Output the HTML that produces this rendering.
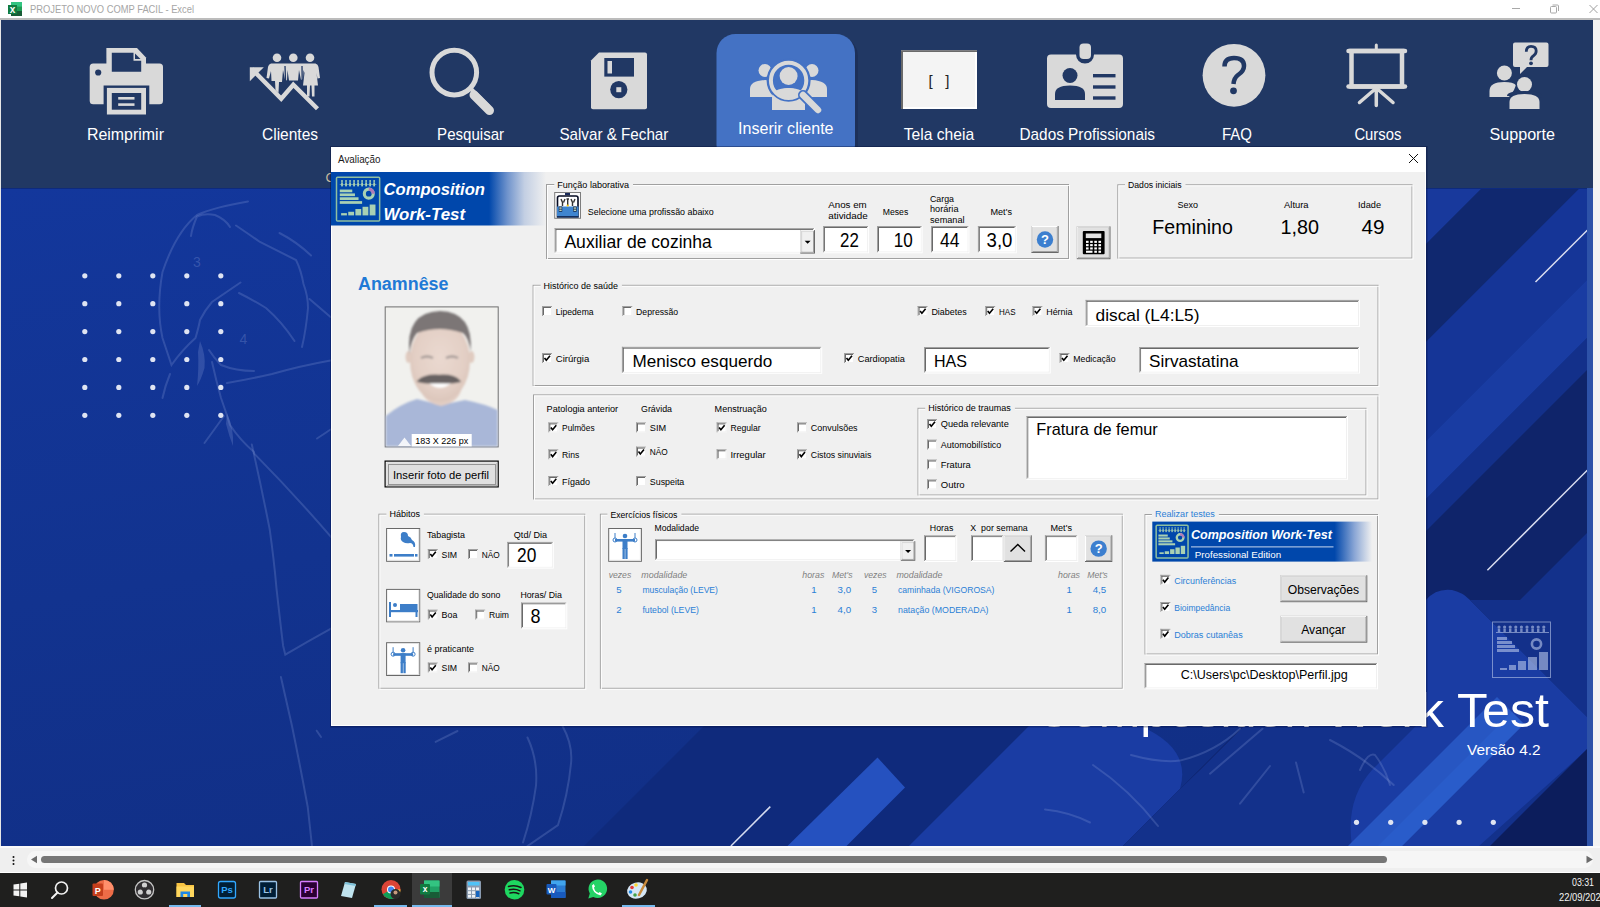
<!DOCTYPE html>
<html><head><meta charset="utf-8">
<style>
*{margin:0;padding:0}
html,body{width:1600px;height:907px;overflow:hidden;background:#fff}
svg{position:absolute;left:0;top:0;font-family:"Liberation Sans",sans-serif}
</style></head><body>
<svg width="1600" height="907" viewBox="0 0 1600 907">
<rect x="0" y="0" width="1600" height="907" fill="#ffffff"/>
<rect x="0" y="18" width="1600" height="2" fill="#bcbcbc"/>
<rect x="0" y="20" width="1" height="826" fill="#e6e6e6"/>
<rect x="1" y="20" width="1592" height="168" fill="#213864"/>
<defs>
<linearGradient id="bgg" x1="0" y1="0" x2="0.4" y2="1">
<stop offset="0" stop-color="#13379c"/><stop offset="0.55" stop-color="#12338f"/><stop offset="1" stop-color="#112f86"/>
</linearGradient>
<clipPath id="bgclip"><rect x="1" y="188" width="1586" height="658"/></clipPath>
</defs>
<g clip-path="url(#bgclip)">
<rect x="1" y="188" width="1586" height="658" fill="url(#bgg)"/>
<path d="M1280 150L1605 150L855 900L530 900Z" fill="#0f2a7c" opacity="1"/>
<path d="M877.5 757.5L905 787.5L846 846.5L787 846.5Z" fill="#2551bf"/>
<path d="M770.3 806.6L730.9 846" stroke="#d5dcf0" stroke-width="1.5"/>
<path d="M909 846L1029 726L1140 726Q1192 748 1180 789L1123 846Z" fill="#1a3ca3"/>
<path d="M1819 150L1860 150L1110 900L1069 900Z" fill="#0f2368" opacity="1"/>
<path d="M1123 846L1180 789L1200 770L1245 725L1600 725V846Z" fill="#13318b"/>
<rect x="1425" y="188" width="162" height="540" fill="#13318b"/>
<clipPath id="rs"><rect x="1425" y="188" width="162" height="540"/></clipPath>
<g clip-path="url(#rs)">
<path d="M-150 150L1520 150L770 900L-900 900Z" fill="#18399c" opacity="1"/>
<path d="M1520 150L1618 150L868 900L770 900Z" fill="#10286f" opacity="1"/>
<path d="M1618 150L1717 150L967 900L868 900Z" fill="#153597" opacity="1"/>
<path d="M1717 150L1775 150L1025 900L967 900Z" fill="#193ca2" opacity="1"/>
<path d="M1775 150L1807 150L1057 900L1025 900Z" fill="#13308a" opacity="1"/>
<path d="M1807 150L1970 150L1220 900L1057 900Z" fill="#0f246a" opacity="1"/>
</g>
<path d="M1426 600Q1436 588 1452 590Q1462 592 1470 600L1600 730V738L1479 846H1352Q1345 800 1372 770L1426 716Z" fill="#1a3ca3"/>
<path d="M1600 730L1470 600L1426 600V716L1372 770Q1345 800 1352 846H1600Z" fill="none"/>
<path d="M1490 846L1600 736V846Z" fill="#0c1d5c"/>
<path d="M1470 600L1600 730V600Z" fill="#13308a"/>
<path d="M1348 846L1497 697L1524 724L1402 846Z" fill="#2756c2"/>
<path d="M1378 846L1512 712L1524 724L1402 846Z" fill="#2c60cf" opacity="0.6"/>
<path d="M1535.5 282L1590 227.5M1487.4 570.3L1590 467.5" stroke="#d8dcef" stroke-width="1.5"/>
<path d="M248 201.5Q215 207 197 215Q176 232 162.5 272Q156 308 162.5 338L171.5 365Q182 350 195.5 338Q199 326 200 320Q205 310 212 302L240.5 282.5" fill="none" stroke="#8aa0dd" stroke-opacity="0.25" stroke-width="2" stroke-linecap="round"/>
<path d="M197 216.5Q205 213 215 215Q225 219 230 227M197 216.5Q192 228 191 236" fill="none" stroke="#8aa0dd" stroke-opacity="0.25" stroke-width="2" stroke-linecap="round"/>
<path d="M236 225.5Q250 235 260 242Q280 252 296 260Q301 270 303.5 284Q308 296 308 308Q306 330 302 347" fill="none" stroke="#8aa0dd" stroke-opacity="0.25" stroke-width="2" stroke-linecap="round"/>
<path d="M279.5 233Q297 242 311 255.5" fill="none" stroke="#8aa0dd" stroke-opacity="0.25" stroke-width="2" stroke-linecap="round"/>
<path d="M309.5 299Q320 308 330.5 317" fill="none" stroke="#8aa0dd" stroke-opacity="0.25" stroke-width="2" stroke-linecap="round"/>
<path d="M239 293Q253 300 266 308Q282 322 294.5 341" fill="none" stroke="#8aa0dd" stroke-opacity="0.25" stroke-width="2" stroke-linecap="round"/>
<path d="M209 350Q214 358 221 365Q236 371 254 371" fill="none" stroke="#8aa0dd" stroke-opacity="0.25" stroke-width="2" stroke-linecap="round"/>
<path d="M227 383Q250 379 272 374Q300 366 330.5 360.5" fill="none" stroke="#8aa0dd" stroke-opacity="0.25" stroke-width="2" stroke-linecap="round"/>
<path d="M170 374Q165 386 162.5 398" fill="none" stroke="#8aa0dd" stroke-opacity="0.25" stroke-width="2" stroke-linecap="round"/>
<path d="M212 362Q216 380 221 398Q226 412 230 425Q240 440 254 452" fill="none" stroke="#8aa0dd" stroke-opacity="0.25" stroke-width="2" stroke-linecap="round"/>
<path d="M224 416Q214 430 204.5 443" fill="none" stroke="#8aa0dd" stroke-opacity="0.25" stroke-width="2" stroke-linecap="round"/>
<path d="M317 438.5Q324 434 330.5 429.5" fill="none" stroke="#8aa0dd" stroke-opacity="0.25" stroke-width="2" stroke-linecap="round"/>
<path d="M251.8 444.5Q262 490 269.7 529.4Q274 560 276.4 587.6Q280 620 283.1 645.7L285.3 654.7Q310 640 332.3 627.8" fill="none" stroke="#8aa0dd" stroke-opacity="0.25" stroke-width="2" stroke-linecap="round"/>
<path d="M254 453.4Q295 495 332.3 538.4" fill="none" stroke="#8aa0dd" stroke-opacity="0.25" stroke-width="2" stroke-linecap="round"/>
<path d="M280.9 677Q286 700 292 726Q300 765 307.7 806.7L312 846" fill="none" stroke="#8aa0dd" stroke-opacity="0.25" stroke-width="2" stroke-linecap="round"/>
<path d="M316.7 730.7L321 737" fill="none" stroke="#8aa0dd" stroke-opacity="0.25" stroke-width="2" stroke-linecap="round"/>
<path d="M527.5 737.5Q538 760 536 785.6Q532 815 523 842.5" fill="none" stroke="#8aa0dd" stroke-opacity="0.25" stroke-width="2" stroke-linecap="round"/>
<path d="M562.5 726Q573 745 571 763.7Q568 795 558 825L527.5 846" fill="none" stroke="#8aa0dd" stroke-opacity="0.25" stroke-width="2" stroke-linecap="round"/>
<path d="M435.6 741.9L457.5 731" fill="none" stroke="#8aa0dd" stroke-opacity="0.25" stroke-width="2" stroke-linecap="round"/>
<path d="M1093 765Q1130 790 1158 826" fill="none" stroke="#8aa0dd" stroke-opacity="0.25" stroke-width="2" stroke-linecap="round"/>
<path d="M1045 809.4Q1070 812 1090 822.5" fill="none" stroke="#8aa0dd" stroke-opacity="0.25" stroke-width="2" stroke-linecap="round"/>
<path d="M1131 755Q1160 763 1180 760.6Q1215 752 1240 728.7" fill="none" stroke="#8aa0dd" stroke-opacity="0.25" stroke-width="2" stroke-linecap="round"/>
<path d="M1210 773.7L1262.5 728.7" fill="none" stroke="#8aa0dd" stroke-opacity="0.25" stroke-width="2" stroke-linecap="round"/>
<path d="M1240 803.7L1270 766" fill="none" stroke="#8aa0dd" stroke-opacity="0.25" stroke-width="2" stroke-linecap="round"/>
<path d="M1296 762.5L1303.7 792.5" fill="none" stroke="#8aa0dd" stroke-opacity="0.25" stroke-width="2" stroke-linecap="round"/>
<path d="M1330 740Q1365 758 1393.7 785" fill="none" stroke="#8aa0dd" stroke-opacity="0.25" stroke-width="2" stroke-linecap="round"/>
<path d="M1360 770Q1368 752 1375 755Q1385 768 1390 785" fill="none" stroke="#8aa0dd" stroke-opacity="0.25" stroke-width="2" stroke-linecap="round"/>
<path d="M200 341Q206 355 204.5 368Q201 380 197 386Q199 368 198 352Z" fill="#8aa0dd" fill-opacity="0.25"/>
<path d="M227 413Q234 428 233 446Q229 436 226 424Z" fill="#8aa0dd" fill-opacity="0.25"/>
<text x="197" y="267" font-size="14" fill="#8aa0dd" fill-opacity="0.3" text-anchor="middle">3</text>
<text x="243.5" y="344" font-size="14" fill="#8aa0dd" fill-opacity="0.3" text-anchor="middle">4</text>
<circle cx="84.8" cy="275.8" r="2.6" fill="#dfe4f2"/>
<circle cx="84.8" cy="303.7" r="2.6" fill="#dfe4f2"/>
<circle cx="84.8" cy="331.6" r="2.6" fill="#dfe4f2"/>
<circle cx="84.8" cy="359.5" r="2.6" fill="#dfe4f2"/>
<circle cx="84.8" cy="387.4" r="2.6" fill="#dfe4f2"/>
<circle cx="84.8" cy="415.3" r="2.6" fill="#dfe4f2"/>
<circle cx="118.8" cy="275.8" r="2.6" fill="#dfe4f2"/>
<circle cx="118.8" cy="303.7" r="2.6" fill="#dfe4f2"/>
<circle cx="118.8" cy="331.6" r="2.6" fill="#dfe4f2"/>
<circle cx="118.8" cy="359.5" r="2.6" fill="#dfe4f2"/>
<circle cx="118.8" cy="387.4" r="2.6" fill="#dfe4f2"/>
<circle cx="118.8" cy="415.3" r="2.6" fill="#dfe4f2"/>
<circle cx="152.8" cy="275.8" r="2.6" fill="#dfe4f2"/>
<circle cx="152.8" cy="303.7" r="2.6" fill="#dfe4f2"/>
<circle cx="152.8" cy="331.6" r="2.6" fill="#dfe4f2"/>
<circle cx="152.8" cy="359.5" r="2.6" fill="#dfe4f2"/>
<circle cx="152.8" cy="387.4" r="2.6" fill="#dfe4f2"/>
<circle cx="152.8" cy="415.3" r="2.6" fill="#dfe4f2"/>
<circle cx="186.8" cy="275.8" r="2.6" fill="#dfe4f2"/>
<circle cx="186.8" cy="303.7" r="2.6" fill="#dfe4f2"/>
<circle cx="186.8" cy="331.6" r="2.6" fill="#dfe4f2"/>
<circle cx="186.8" cy="359.5" r="2.6" fill="#dfe4f2"/>
<circle cx="186.8" cy="387.4" r="2.6" fill="#dfe4f2"/>
<circle cx="186.8" cy="415.3" r="2.6" fill="#dfe4f2"/>
<circle cx="220.8" cy="275.8" r="2.6" fill="#dfe4f2"/>
<circle cx="220.8" cy="303.7" r="2.6" fill="#dfe4f2"/>
<circle cx="220.8" cy="331.6" r="2.6" fill="#dfe4f2"/>
<circle cx="220.8" cy="359.5" r="2.6" fill="#dfe4f2"/>
<circle cx="220.8" cy="387.4" r="2.6" fill="#dfe4f2"/>
<circle cx="220.8" cy="415.3" r="2.6" fill="#dfe4f2"/>
<circle cx="1356.5" cy="822.3" r="2.6" fill="#dfe4f2"/>
<circle cx="1390.7" cy="822.3" r="2.6" fill="#dfe4f2"/>
<circle cx="1424.9" cy="822.3" r="2.6" fill="#dfe4f2"/>
<circle cx="1459.1" cy="822.3" r="2.6" fill="#dfe4f2"/>
<circle cx="1493.3" cy="822.3" r="2.6" fill="#dfe4f2"/>
<g font-size="49" fill="#ffffff"><text x="1035" y="727" textLength="277" lengthAdjust="spacingAndGlyphs">Composition</text><text x="1325" y="727" textLength="119" lengthAdjust="spacingAndGlyphs">Work</text><text x="1457" y="727" textLength="92" lengthAdjust="spacingAndGlyphs">Test</text></g>
<text x="1467" y="755" font-size="15.3" fill="#ffffff" textLength="73.5" lengthAdjust="spacingAndGlyphs">Versão 4.2</text>
<g opacity="0.6">
<rect x="1492.5" y="622" width="58" height="55.5" fill="none" stroke="#b8c6ea" stroke-width="1"/>
<g fill="#b8c6ea">
<circle cx="1499.0" cy="627" r="1.6"/><rect x="1497.8" y="628.5" width="2.4" height="4"/>
<circle cx="1504.6" cy="627" r="1.6"/><rect x="1503.4" y="628.5" width="2.4" height="4"/>
<circle cx="1510.2" cy="627" r="1.6"/><rect x="1509.0" y="628.5" width="2.4" height="4"/>
<circle cx="1515.8" cy="627" r="1.6"/><rect x="1514.6" y="628.5" width="2.4" height="4"/>
<circle cx="1521.4" cy="627" r="1.6"/><rect x="1520.2" y="628.5" width="2.4" height="4"/>
<circle cx="1527.0" cy="627" r="1.6"/><rect x="1525.8" y="628.5" width="2.4" height="4"/>
<circle cx="1532.6" cy="627" r="1.6"/><rect x="1531.4" y="628.5" width="2.4" height="4"/>
<circle cx="1538.2" cy="627" r="1.6"/><rect x="1537.0" y="628.5" width="2.4" height="4"/>
<circle cx="1543.8" cy="627" r="1.6"/><rect x="1542.6" y="628.5" width="2.4" height="4"/>
<rect x="1496" y="632" width="53" height="1" fill="#b8c6ea"/>
<rect x="1497" y="637" width="10" height="3" fill="#b8c6ea"/>
<rect x="1497" y="641" width="15" height="3" fill="#b8c6ea"/>
<rect x="1497" y="645" width="18" height="3" fill="#b8c6ea"/>
<rect x="1497" y="649" width="22" height="3" fill="#b8c6ea"/>
<circle cx="1536.5" cy="644" r="4.6" fill="none" stroke="#b8c6ea" stroke-width="2.6"/>
<rect x="1500" y="668" width="7" height="2" fill="#b8c6ea"/>
<rect x="1509" y="665" width="7" height="5" fill="#b8c6ea"/>
<rect x="1518" y="661" width="8" height="9" fill="#b8c6ea"/>
<rect x="1528" y="657" width="9" height="13" fill="#b8c6ea"/>
<rect x="1539" y="652" width="9" height="18" fill="#b8c6ea"/>
</g></g>
</g>
<rect x="1" y="188" width="1586" height="1" fill="#0d2a7e"/>
<rect x="1587" y="188" width="6" height="658" fill="#2d52a8"/>
<rect x="1593" y="20" width="7" height="826" fill="#f3f3f3"/>
<g fill="#d9d9d9">
 <!-- printer -->
 <rect x="89.7" y="63.6" width="73.3" height="40.6" rx="3.5"/>
 <path d="M106.4 47.9H137L146 57.5V66H106.4Z"/>
 <path d="M111.8 52.7H133.5V60.8H141.2V71.8H111.8Z" fill="#213864"/>
 <path d="M135 53.5L140.5 59H135Z" fill="#213864"/>
 <circle cx="98.2" cy="72.5" r="3.1" fill="#213864"/>
 <rect x="103.6" y="85.5" width="45.7" height="20" fill="#213864"/>
 <rect x="106.9" y="87.9" width="39.1" height="26.6"/>
 <rect x="111.8" y="93" width="29.4" height="16.7" fill="#213864"/>
 <rect x="118.2" y="97" width="16.3" height="2.6"/>
 <rect x="118.2" y="103.3" width="16.3" height="2.6"/>
 <!-- clientes -->
 <path d="M252 69L281.2 98.8L293.3 84.8L317.5 108.8" fill="none" stroke="#d9d9d9" stroke-width="4.4" stroke-linejoin="miter"/>
 <path d="M249.8 67.3L263.8 67.3L249.8 81.3Z"/>
 <circle cx="277" cy="57.8" r="4.3"/><circle cx="293.3" cy="57.8" r="4.3"/><circle cx="310" cy="57.8" r="4.3"/>
 <path d="M271 63.5Q268.5 64 268 67L266.5 78L269 78.5L271 71L271.5 81L275 81L275.5 90L278.5 93L279 82L282 82L283 70L285 79.5L287 80.5L287.5 70L289 80.5L298 80.5L299 70L301 80L303 79L303.5 70L304.5 73L303 85.5L307 85.5L307 96.5L309.5 96.5L310 85.5L311.5 85.5L312 96.5L314.5 96.5L314.5 85.5L318 85.5L316.5 73L317.5 78.5L320 78L318.5 67Q318 64 315.5 63.5Z"/>
 <path d="M285 66L285.5 80M302 66L302.2 80" stroke="#213864" stroke-width="1.3"/>
 <!-- pesquisar -->
 <circle cx="454.3" cy="72.6" r="22.3" fill="none" stroke="#d9d9d9" stroke-width="5"/>
 <path d="M471 89L489 107" stroke="#d9d9d9" stroke-width="4" fill="none"/>
 <path d="M474 95L489.5 110.5" stroke="#d9d9d9" stroke-width="9" stroke-linecap="round" fill="none"/>
 <!-- salvar -->
 <path d="M599 52.5H645A2 2 0 0 1 647 54.5V107.3A2 2 0 0 1 645 109.3H593A2 2 0 0 1 591 107.3V60.5Z"/>
 <rect x="604.3" y="58" width="29.7" height="18.6" fill="#213864"/>
 <rect x="607.5" y="61" width="4.5" height="12.5"/>
 <circle cx="618.8" cy="89.6" r="8.6" fill="#213864"/>
 <rect x="616.3" y="87.2" width="5" height="5"/>

 <!-- inserir cliente button -->
</g>
<rect x="716.5" y="34" width="138.5" height="130" rx="19" fill="#1a2c52" opacity="0.6" transform="translate(3,3)"/>
<rect x="716.5" y="34" width="138.5" height="130" rx="19" fill="#4472c4"/>
<g fill="#d9d9d9">
 <circle cx="765" cy="70.5" r="6.5"/><circle cx="812" cy="70.5" r="6.5"/>
 <path d="M750 97V89Q750 81 765 80Q772 80 776 82V97Z"/>
 <path d="M827 97V89Q827 81 812 80Q805 80 801 82V97Z"/>
 <circle cx="788.6" cy="80.4" r="22" fill="#4472c4"/>
 <circle cx="788.6" cy="76" r="9"/>
 <path d="M772 110V98Q772 88 788.6 88Q805 88 805 98V110Z"/>
 <path d="M773 99Q778 88 788.6 88Q800 88 805 99V110H772Z" />
 <circle cx="788.6" cy="80.4" r="19.5" fill="none" stroke="#4472c4" stroke-width="3.5"/>
 <circle cx="788.6" cy="80.4" r="17.7" fill="none" stroke="#d9d9d9" stroke-width="4"/>
 <path d="M803 95L818 110" stroke="#4472c4" stroke-width="10" stroke-linecap="round"/>
 <path d="M803 95L818 110" stroke="#d9d9d9" stroke-width="6.5" stroke-linecap="round"/>
 <path d="M772 98Q780 90 788.6 90.5Q797 90 805 98L801 103Q795 97 788.6 97Q782 97 776 103Z" fill="none"/>
</g>
<!-- tela cheia -->
<rect x="901" y="50.3" width="76" height="58.7" fill="#ffffff"/>
<path d="M901 50.3H977V52H903V109H901Z" fill="#6a6a6a"/>
<rect x="903" y="52" width="72" height="55" fill="#f4f4f4"/>
<text x="939" y="86" font-family="Liberation Sans" font-size="15" fill="#222" text-anchor="middle" style="white-space:pre">[   ]</text>
<g fill="#d9d9d9">
 <!-- dados profissionais -->
 <path d="M1051 54.6H1076A6 6 0 0 0 1094 54.6H1119A4 4 0 0 1 1123 58.6V103.9A4 4 0 0 1 1119 107.9H1051A4 4 0 0 1 1047 103.9V58.6A4 4 0 0 1 1051 54.6Z"/>
 <rect x="1079.5" y="43.5" width="11.5" height="15.5" rx="4"/>
 <circle cx="1070" cy="75.5" r="7.5" fill="#213864"/>
 <path d="M1055 100V94Q1055 85.5 1070 85.5Q1085 85.5 1085 94V100Z" fill="#213864"/>
 <rect x="1093" y="74" width="22.5" height="3.4" fill="#213864"/>
 <rect x="1093" y="85.3" width="22.5" height="3.4" fill="#213864"/>
 <rect x="1093" y="96.3" width="22.5" height="3.4" fill="#213864"/>
 <!-- faq -->
 <circle cx="1234" cy="75.3" r="31.4"/>
 <path d="M1224.5 66.5Q1224.5 58 1234 58Q1244 58 1244 66Q1244 71 1238 75Q1234 78 1233.5 84" fill="none" stroke="#213864" stroke-width="4.5"/>
 <circle cx="1233.5" cy="90.8" r="3.4" fill="#213864"/>
 <!-- cursos -->
 <path d="M1348.5 51H1405" stroke="#d9d9d9" stroke-width="4.5" stroke-linecap="round"/>
 <path d="M1348.5 86.5H1405" stroke="#d9d9d9" stroke-width="4.5" stroke-linecap="round"/>
 <rect x="1351.5" y="51" width="50.5" height="35.5" fill="none" stroke="#d9d9d9" stroke-width="4.5"/>
 <path d="M1376.3 45V51" stroke="#d9d9d9" stroke-width="3" stroke-linecap="round"/>
 <path d="M1376.3 88V105.5M1376.3 88L1359.5 102.5M1376.3 88L1393 102.5" stroke="#d9d9d9" stroke-width="3.5" stroke-linecap="round"/>
 <!-- supporte -->
 <path d="M1515 42.6H1546.5A2 2 0 0 1 1548.5 44.6V65A2 2 0 0 1 1546.5 67H1527L1520 74L1520 67H1515A2 2 0 0 1 1513 65V44.6A2 2 0 0 1 1515 42.6Z"/>
 <path d="M1526.3 51.8Q1526.3 46.3 1531 46.3Q1536.2 46.3 1536.2 51Q1536.2 54 1533.2 56Q1531 57.2 1531 60.2" fill="none" stroke="#213864" stroke-width="2.8"/>
 <circle cx="1531" cy="63.3" r="1.9" fill="#213864"/>
 <circle cx="1504.4" cy="73" r="7.5"/>
 <path d="M1489.5 97V91Q1489.5 82 1504.4 82Q1513 82 1516 85L1514 90L1509 97Z"/>
 <circle cx="1524.5" cy="84.5" r="9" fill="#213864"/>
 <circle cx="1524.5" cy="84.5" r="7.5"/>
 <path d="M1507 96Q1507 91 1524.5 91Q1542 91 1542 96V98Z" fill="#213864"/>
 <path d="M1509.5 109V102Q1509.5 94 1524.5 94Q1539.5 94 1539.5 102V109Z"/>
</g>
<g font-family="Liberation Sans" font-size="16.2" fill="#ffffff" text-anchor="middle">
 <text x="125.45" y="140" textLength="77" lengthAdjust="spacingAndGlyphs">Reimprimir</text>
 <text x="290" y="140" textLength="56" lengthAdjust="spacingAndGlyphs">Clientes</text>
 <text x="470.6" y="140" textLength="67" lengthAdjust="spacingAndGlyphs">Pesquisar</text>
 <text x="613.9" y="140" textLength="109" lengthAdjust="spacingAndGlyphs">Salvar &amp; Fechar</text>
 <text x="785.8" y="134.2" textLength="95.5" lengthAdjust="spacingAndGlyphs">Inserir cliente</text>
 <text x="938.9" y="140" textLength="70.5" lengthAdjust="spacingAndGlyphs">Tela cheia</text>
 <text x="1087.25" y="140" textLength="135.5" lengthAdjust="spacingAndGlyphs">Dados Profissionais</text>
 <text x="1237" y="140" textLength="30" lengthAdjust="spacingAndGlyphs">FAQ</text>
 <text x="1377.9" y="140" textLength="47" lengthAdjust="spacingAndGlyphs">Cursos</text>
 <text x="1522.2" y="140" textLength="65.5" lengthAdjust="spacingAndGlyphs">Supporte</text>
</g>
<!-- title bar -->
<g>
 <rect x="11" y="2" width="11" height="14" fill="#1f9d55"/>
 <rect x="11" y="2" width="11" height="4.6" fill="#33c481"/>
 <rect x="11" y="11" width="11" height="5" fill="#185c37"/>
 <rect x="8" y="5" width="9" height="9" fill="#107c41"/>
 <text x="12.6" y="13.2" font-family="Liberation Sans" font-size="10" font-weight="bold" fill="#fff" text-anchor="middle">x</text>
 <text x="30" y="12.8" font-family="Liberation Sans" font-size="10.5" fill="#a6a6a6" textLength="164" lengthAdjust="spacingAndGlyphs">PROJETO NOVO COMP FACIL - Excel</text>
 <path d="M1512 8.5H1520" stroke="#a8a8a8" stroke-width="1"/>
 <rect x="1550.5" y="6.5" width="6" height="6.5" rx="1" fill="none" stroke="#a8a8a8" stroke-width="1"/>
 <path d="M1552.5 5H1557.5A1 1 0 0 1 1558.5 6V11" fill="none" stroke="#a8a8a8" stroke-width="1"/>
 <path d="M1589.5 5L1597.5 13M1597.5 5L1589.5 13" stroke="#a0a0a0" stroke-width="1"/>
</g>

<text x="325.5" y="181.5" font-size="13" fill="#c9bb9f" textLength="9">C</text>
<rect x="330" y="146" width="1097.5" height="581.5" fill="#000a30" opacity="0.35"/>
<rect x="331" y="147" width="1095" height="579" fill="#ffffff"/>
<rect x="332" y="147" width="1093" height="578" fill="#f0f0f0"/>
<rect x="332" y="147" width="1093" height="25" fill="#ffffff"/>
<text x="338" y="162.6" font-size="10" fill="#1a1a1a" textLength="42.5" lengthAdjust="spacingAndGlyphs">Avaliação</text>
<path d="M1409 154L1418 163M1418 154L1409 163" stroke="#111" stroke-width="1"/>
<defs><linearGradient id="bang" x1="0" y1="0" x2="1" y2="0">
<stop offset="0" stop-color="#0047ab"/><stop offset="0.735" stop-color="#0047ab"/><stop offset="0.82" stop-color="#6f93cc"/><stop offset="0.9" stop-color="#c3cfe3"/><stop offset="1" stop-color="#f0f0f0"/></linearGradient>
<linearGradient id="bang2" x1="0" y1="0" x2="1" y2="0">
<stop offset="0" stop-color="#0047ab"/><stop offset="0.83" stop-color="#0047ab"/><stop offset="0.92" stop-color="#8aa6d5"/><stop offset="1" stop-color="#f0f0f0"/></linearGradient></defs>
<rect x="331" y="172" width="215" height="53.5" fill="url(#bang)"/>
<rect x="336.5" y="177.15" width="43.14999999999998" height="43.849999999999994" fill="none" stroke="#8fbfa0" stroke-width="1.5" rx="1"/>
<g fill="#a9d1b3">
<circle cx="342.00" cy="180.94" r="0.98"/>
<rect x="341.11" y="182.30" width="1.79" height="4.08"/>
<circle cx="346.02" cy="180.94" r="0.98"/>
<rect x="345.13" y="182.30" width="1.79" height="4.08"/>
<circle cx="350.04" cy="180.94" r="0.98"/>
<rect x="349.14" y="182.30" width="1.79" height="4.08"/>
<circle cx="354.06" cy="180.94" r="0.98"/>
<rect x="353.16" y="182.30" width="1.79" height="4.08"/>
<circle cx="358.07" cy="180.94" r="0.98"/>
<rect x="357.18" y="182.30" width="1.79" height="4.08"/>
<circle cx="362.09" cy="180.94" r="0.98"/>
<rect x="361.20" y="182.30" width="1.79" height="4.08"/>
<circle cx="366.11" cy="180.94" r="0.98"/>
<rect x="365.22" y="182.30" width="1.79" height="4.08"/>
<circle cx="370.13" cy="180.94" r="0.98"/>
<rect x="369.24" y="182.30" width="1.79" height="4.08"/>
<circle cx="374.15" cy="180.94" r="0.98"/>
<rect x="373.26" y="182.30" width="1.79" height="4.08"/>
<rect x="339.77" y="184.11" width="36.61" height="0.54"/>
<rect x="339.77" y="189.55" width="12.50" height="2.72"/>
<rect x="339.77" y="193.41" width="15.18" height="2.72"/>
<rect x="339.77" y="197.26" width="18.75" height="2.72"/>
<rect x="339.77" y="201.12" width="22.32" height="2.72"/>
<circle cx="368.79" cy="193.63" r="4.46" fill="none" stroke="#a9d1b3" stroke-width="3.13"/>
<path d="M368.79 189.17A4.46 4.46 0 0 1 373.26 193.63" fill="none" stroke="#b07ab8" stroke-width="3.13"/>
<rect x="341.11" y="213.13" width="5.80" height="2.27"/>
<rect x="348.25" y="211.77" width="5.80" height="3.63"/>
<rect x="355.40" y="209.05" width="5.80" height="6.35"/>
<rect x="362.54" y="206.78" width="5.80" height="8.62"/>
<rect x="369.68" y="204.52" width="5.80" height="10.88"/>
</g>
<text x="383.5" y="194.9" font-size="16.5" fill="#fff" font-weight="700" font-style="italic" textLength="101.5" lengthAdjust="spacingAndGlyphs">Composition</text>
<text x="383.5" y="219.5" font-size="16.5" fill="#fff" font-weight="700" font-style="italic" textLength="81.5" lengthAdjust="spacingAndGlyphs">Work-Test</text>
<rect x="546.5" y="184.5" width="522" height="74" fill="none" stroke="#a0a0a0" stroke-width="1"/>
<rect x="547.5" y="185.5" width="522" height="74" fill="none" stroke="#ffffff" stroke-width="1" opacity="0.9"/>
<rect x="554.3" y="182" width="78.7" height="5" fill="#f0f0f0"/>
<text x="557.3" y="188.2" font-size="9.6" fill="#000" textLength="71.7" lengthAdjust="spacingAndGlyphs">Função laborativa</text>
<rect x="554.2" y="192" width="26.8" height="26.8" fill="#7d7d7d"/>
<rect x="555.2" y="193" width="24.8" height="24.8" fill="#fbfbfb"/>
<rect x="565" y="193" width="5" height="2.2" fill="#1a2a5a"/>
<path d="M557.5 216.8V198Q557.5 196 559.5 196H576Q578 196 578 198V216.8Z" fill="#ffffff" stroke="#060b22" stroke-width="1.6"/>
<rect x="557" y="206.5" width="21.5" height="10.8" fill="#3f85cf"/>
<path d="M557 216.8H578.5" stroke="#0b1a40" stroke-width="1.2"/>
<path d="M561 199L562.5 202.5V206M565 199L563.5 202.5M566.5 199H569M567.7 199V205.5M571 199L572.5 202.5V206M575 199L573.5 202.5" fill="none" stroke="#333" stroke-width="1.4"/>
<circle cx="567.7" cy="205.5" r="1.1" fill="#f2c200"/>
<rect x="558.8" y="206.5" width="3.4" height="5.2" fill="#14213d"/><rect x="559.3" y="207.4" width="2.4" height="1.3" fill="#cfe6c8"/><rect x="559.3" y="209.6" width="2.4" height="1.3" fill="#cfe6c8"/>
<rect x="573.2" y="206.5" width="3.4" height="5.2" fill="#14213d"/><rect x="573.7" y="207.4" width="2.4" height="1.3" fill="#cfe6c8"/><rect x="573.7" y="209.6" width="2.4" height="1.3" fill="#cfe6c8"/>
<text x="587.8" y="214.7" font-size="9.6" fill="#000" textLength="125.9" lengthAdjust="spacingAndGlyphs">Selecione uma profissão abaixo</text>
<rect x="554.6" y="228.1" width="260.4" height="25.5" fill="#ffffff"/>
<rect x="554.6" y="228.1" width="259.4" height="1.0" fill="#a0a0a0"/>
<rect x="554.6" y="228.1" width="1.0" height="24.5" fill="#a0a0a0"/>
<rect x="555.6" y="229.1" width="257.4" height="1.0" fill="#696969"/>
<rect x="555.6" y="229.1" width="1.0" height="22.5" fill="#696969"/>
<rect x="555.6" y="251.6" width="258.4" height="1.0" fill="#f0f0f0"/>
<rect x="813" y="229.1" width="1" height="23.5" fill="#f0f0f0"/>
<rect x="556.6" y="230.1" width="256.4" height="21.5" fill="#fff"/>
<rect x="800.3" y="230.1" width="14.7" height="23.5" fill="#696969"/>
<rect x="800.3" y="230.1" width="13.7" height="22.5" fill="#ffffff"/>
<rect x="801.3" y="231.1" width="12.7" height="21.5" fill="#a0a0a0"/>
<rect x="801.3" y="231.1" width="11.7" height="20.5" fill="#e3e3e3"/>
<rect x="802.3" y="232.1" width="10.7" height="19.5" fill="#f0f0f0"/>
<path d="M804.65 240.85H810.65L807.65 243.85Z" fill="#000"/>
<text x="564.4" y="248.4" font-size="17.5" fill="#000" textLength="147.5" lengthAdjust="spacingAndGlyphs">Auxiliar de cozinha</text>
<text x="847.5" y="208" font-size="9.6" fill="#000" text-anchor="middle" textLength="38.5" lengthAdjust="spacingAndGlyphs">Anos em</text>
<text x="848" y="219" font-size="9.6" fill="#000" text-anchor="middle" textLength="39.5" lengthAdjust="spacingAndGlyphs">atividade</text>
<text x="895.5" y="215" font-size="9.6" fill="#000" text-anchor="middle" textLength="25.5" lengthAdjust="spacingAndGlyphs">Meses</text>
<text x="930" y="201.6" font-size="9.6" fill="#000" textLength="24" lengthAdjust="spacingAndGlyphs">Carga</text>
<text x="930" y="211.9" font-size="9.6" fill="#000" textLength="28.5" lengthAdjust="spacingAndGlyphs">horária</text>
<text x="930" y="223" font-size="9.6" fill="#000" textLength="34.5" lengthAdjust="spacingAndGlyphs">semanal</text>
<text x="1001.2" y="215" font-size="9.6" fill="#000" text-anchor="middle" textLength="21.5" lengthAdjust="spacingAndGlyphs">Met's</text>
<rect x="823.1" y="226" width="46.0" height="27.3" fill="#ffffff"/>
<rect x="823.1" y="226" width="45.0" height="1" fill="#a0a0a0"/>
<rect x="823.1" y="226" width="1.0" height="26.3" fill="#a0a0a0"/>
<rect x="824.1" y="227" width="43.0" height="1" fill="#696969"/>
<rect x="824.1" y="227" width="1.0" height="24.3" fill="#696969"/>
<rect x="824.1" y="251.3" width="44.0" height="1.0" fill="#f0f0f0"/>
<rect x="867.1" y="227" width="1.0" height="25.3" fill="#f0f0f0"/>
<rect x="825.1" y="228" width="42.0" height="23.3" fill="#fff"/>
<text x="849.4" y="246.9" font-size="20.5" fill="#000" text-anchor="middle" textLength="18.8" lengthAdjust="spacingAndGlyphs">22</text>
<rect x="877" y="226" width="45.6" height="27.3" fill="#ffffff"/>
<rect x="877" y="226" width="44.6" height="1" fill="#a0a0a0"/>
<rect x="877" y="226" width="1" height="26.3" fill="#a0a0a0"/>
<rect x="878" y="227" width="42.6" height="1" fill="#696969"/>
<rect x="878" y="227" width="1" height="24.3" fill="#696969"/>
<rect x="878" y="251.3" width="43.6" height="1.0" fill="#f0f0f0"/>
<rect x="920.6" y="227" width="1.0" height="25.3" fill="#f0f0f0"/>
<rect x="879" y="228" width="41.6" height="23.3" fill="#fff"/>
<text x="903.3" y="246.9" font-size="20.5" fill="#000" text-anchor="middle" textLength="19" lengthAdjust="spacingAndGlyphs">10</text>
<rect x="931" y="226" width="38.4" height="27.3" fill="#ffffff"/>
<rect x="931" y="226" width="37.4" height="1" fill="#a0a0a0"/>
<rect x="931" y="226" width="1" height="26.3" fill="#a0a0a0"/>
<rect x="932" y="227" width="35.4" height="1" fill="#696969"/>
<rect x="932" y="227" width="1" height="24.3" fill="#696969"/>
<rect x="932" y="251.3" width="36.4" height="1.0" fill="#f0f0f0"/>
<rect x="967.4" y="227" width="1.0" height="25.3" fill="#f0f0f0"/>
<rect x="933" y="228" width="34.4" height="23.3" fill="#fff"/>
<text x="949.7" y="246.9" font-size="20.5" fill="#000" text-anchor="middle" textLength="19.5" lengthAdjust="spacingAndGlyphs">44</text>
<rect x="977.9" y="226" width="38.8" height="27.3" fill="#ffffff"/>
<rect x="977.9" y="226" width="37.8" height="1" fill="#a0a0a0"/>
<rect x="977.9" y="226" width="1.0" height="26.3" fill="#a0a0a0"/>
<rect x="978.9" y="227" width="35.8" height="1" fill="#696969"/>
<rect x="978.9" y="227" width="1.0" height="24.3" fill="#696969"/>
<rect x="978.9" y="251.3" width="36.8" height="1.0" fill="#f0f0f0"/>
<rect x="1014.7" y="227" width="1.0" height="25.3" fill="#f0f0f0"/>
<rect x="979.9" y="228" width="34.8" height="23.3" fill="#fff"/>
<text x="999.5" y="246.9" font-size="20.5" fill="#000" text-anchor="middle" textLength="25.8" lengthAdjust="spacingAndGlyphs">3,0</text>
<rect x="1031.4" y="226" width="27.2" height="27" fill="#696969"/>
<rect x="1031.4" y="226" width="26.2" height="26" fill="#ffffff"/>
<rect x="1032.4" y="227" width="25.2" height="25" fill="#a0a0a0"/>
<rect x="1032.4" y="227" width="24.2" height="24" fill="#e3e3e3"/>
<rect x="1033.4" y="228" width="23.2" height="23" fill="#e1e1e1"/>
<circle cx="1045.0" cy="239.5" r="8.2" fill="#3c7fcf"/>
<text x="1045.0" y="244.1" font-size="13" fill="#fff" font-weight="700" text-anchor="middle">?</text>
<rect x="1076.8" y="226.4" width="33.7" height="32.8" fill="#696969"/>
<rect x="1076.8" y="226.4" width="32.7" height="31.8" fill="#ffffff"/>
<rect x="1077.8" y="227.4" width="31.7" height="30.8" fill="#a0a0a0"/>
<rect x="1077.8" y="227.4" width="30.7" height="29.8" fill="#e3e3e3"/>
<rect x="1078.8" y="228.4" width="29.7" height="28.8" fill="#e1e1e1"/>
<rect x="1082.8" y="231" width="21.8" height="23.3" fill="#000" rx="1"/>
<rect x="1085.8" y="233.5" width="15.5" height="4.6" fill="#e2e2e2"/>
<rect x="1086.00" y="240.80" width="2.6" height="2.1" fill="#fff"/>
<rect x="1090.15" y="240.80" width="2.6" height="2.1" fill="#fff"/>
<rect x="1094.30" y="240.80" width="2.6" height="2.1" fill="#fff"/>
<rect x="1098.45" y="240.80" width="2.6" height="2.1" fill="#fff"/>
<rect x="1086.00" y="244.10" width="2.6" height="2.1" fill="#fff"/>
<rect x="1090.15" y="244.10" width="2.6" height="2.1" fill="#fff"/>
<rect x="1094.30" y="244.10" width="2.6" height="2.1" fill="#fff"/>
<rect x="1098.45" y="244.10" width="2.6" height="2.1" fill="#fff"/>
<rect x="1086.00" y="247.40" width="2.6" height="2.1" fill="#fff"/>
<rect x="1090.15" y="247.40" width="2.6" height="2.1" fill="#fff"/>
<rect x="1094.30" y="247.40" width="2.6" height="2.1" fill="#fff"/>
<rect x="1098.45" y="247.40" width="2.6" height="2.1" fill="#fff"/>
<rect x="1086.00" y="250.70" width="6.5" height="2.1" fill="#fff"/>
<rect x="1094.30" y="250.70" width="2.6" height="2.1" fill="#fff"/>
<rect x="1098.45" y="250.70" width="2.6" height="2.1" fill="#fff"/>
<rect x="1117.8" y="184.8" width="294.20000000000005" height="73.30000000000001" fill="none" stroke="#a0a0a0" stroke-width="1"/>
<rect x="1118.8" y="185.8" width="294.20000000000005" height="73.30000000000001" fill="none" stroke="#ffffff" stroke-width="1" opacity="0.9"/>
<rect x="1125" y="182.3" width="60.5" height="5.0" fill="#f0f0f0"/>
<text x="1128" y="188.2" font-size="9.6" fill="#000" textLength="53.5" lengthAdjust="spacingAndGlyphs">Dados iniciais</text>
<text x="1187.8" y="208.4" font-size="9.6" fill="#000" text-anchor="middle" textLength="20.5" lengthAdjust="spacingAndGlyphs">Sexo</text>
<text x="1296.3" y="208.4" font-size="9.6" fill="#000" text-anchor="middle" textLength="24.5" lengthAdjust="spacingAndGlyphs">Altura</text>
<text x="1369.5" y="208.4" font-size="9.6" fill="#000" text-anchor="middle" textLength="23" lengthAdjust="spacingAndGlyphs">Idade</text>
<text x="1152.3" y="233.9" font-size="20" fill="#000" textLength="80.5" lengthAdjust="spacingAndGlyphs">Feminino</text>
<text x="1280.5" y="233.9" font-size="20" fill="#000" textLength="38.5" lengthAdjust="spacingAndGlyphs">1,80</text>
<text x="1361.6" y="233.9" font-size="20" fill="#000" textLength="23" lengthAdjust="spacingAndGlyphs">49</text>
<text x="358" y="290.4" font-size="17.5" fill="#1f7ad6" font-weight="700" textLength="90.5" lengthAdjust="spacingAndGlyphs">Anamnêse</text>
<defs><radialGradient id="face" cx="0.5" cy="0.45" r="0.55"><stop offset="0" stop-color="#ead9d0"/><stop offset="0.75" stop-color="#e3cfc5"/><stop offset="1" stop-color="#dcc6bb"/></radialGradient>
<filter id="blur1" x="-10%" y="-10%" width="120%" height="120%"><feGaussianBlur stdDeviation="1.1"/></filter></defs>
<rect x="384.7" y="306.4" width="114.0" height="141.0" fill="#6e6e6e"/>
<rect x="385.7" y="307.4" width="112.0" height="139.0" fill="#f1f1ee"/>
<g filter="url(#blur1)">
<path d="M385.7 416Q400 404 417 399L441 405L465 400Q485 404 497.7 410V446.4H385.7Z" fill="#a9b7d8"/>
<path d="M420 385Q421 402 441 406Q461 402 462 385Z" fill="#e2cdc3"/>
<ellipse cx="440" cy="361" rx="30" ry="41" fill="url(#face)"/>
<ellipse cx="408.5" cy="357" rx="3" ry="6" fill="#e0cbc0"/><ellipse cx="471.5" cy="357" rx="3" ry="6" fill="#e0cbc0"/>
<path d="M409.5 354Q405 312 440 311Q474 312 470.5 352Q469 338 463 333Q450 329 440 329Q428 329 417 333Q411 340 409.5 354Z" fill="#7b7676"/>
<path d="M419 381Q425 375 439 376Q454 375 459 381Q453 383 439 382Q425 383 419 381Z" fill="#676262" stroke="#676262" stroke-width="2.6"/>
<path d="M429 383.5Q440 392 451 383.5Z" fill="#ffffff"/>
<path d="M421 358Q427 355 433 358M446 358Q452 355 458 358" stroke="#a89d99" stroke-width="2.4" fill="none"/>
</g>
<rect x="411.7" y="434" width="60.0" height="12.4" fill="#ffffff"/>
<path d="M398 446L404.5 437.5L411 446Z" fill="#fff" opacity="0.85"/>
<text x="415.3" y="443.8" font-size="9" fill="#000" textLength="53" lengthAdjust="spacingAndGlyphs">183 X 226 px</text>
<rect x="384.5" y="460.5" width="114.3" height="27.0" fill="#000000"/>
<rect x="385.7" y="461.7" width="111.9" height="24.6" fill="#ffffff"/>
<rect x="386.7" y="462.7" width="110.9" height="23.6" fill="#a0a0a0"/>
<rect x="386.7" y="462.7" width="109.9" height="22.6" fill="#e0e0e0"/>
<rect x="388.5" y="464.5" width="107" height="20" fill="none" stroke="#4a4a4a" stroke-width="1" stroke-dasharray="1 1"/>
<text x="393" y="479" font-size="11" fill="#000" textLength="96" lengthAdjust="spacingAndGlyphs">Inserir foto de perfil</text>
<rect x="533.1" y="285.3" width="844.9" height="100.19999999999999" fill="none" stroke="#a0a0a0" stroke-width="1"/>
<rect x="534.1" y="286.3" width="844.9" height="100.19999999999999" fill="none" stroke="#ffffff" stroke-width="1" opacity="0.9"/>
<rect x="540.6" y="282.8" width="81.3" height="5.0" fill="#f0f0f0"/>
<text x="543.6" y="289" font-size="9.6" fill="#000" textLength="74.3" lengthAdjust="spacingAndGlyphs">Histórico de saúde</text>
<rect x="542" y="306" width="10" height="10" fill="#ffffff"/>
<rect x="542" y="306" width="10" height="1" fill="#a0a0a0"/>
<rect x="542" y="306" width="1" height="10" fill="#a0a0a0"/>
<rect x="543" y="307" width="8" height="1" fill="#696969"/>
<rect x="543" y="307" width="1" height="8" fill="#696969"/>
<rect x="543" y="315" width="9" height="1" fill="#f0f0f0"/>
<rect x="551" y="307" width="1" height="9" fill="#f0f0f0"/>
<text x="555.8" y="314.8" font-size="8.6" fill="#000" textLength="37.8" lengthAdjust="spacingAndGlyphs">Lipedema</text>
<rect x="622.3" y="306" width="10.0" height="10" fill="#ffffff"/>
<rect x="622.3" y="306" width="10.0" height="1" fill="#a0a0a0"/>
<rect x="622.3" y="306" width="1.0" height="10" fill="#a0a0a0"/>
<rect x="623.3" y="307" width="8.0" height="1" fill="#696969"/>
<rect x="623.3" y="307" width="1.0" height="8" fill="#696969"/>
<rect x="623.3" y="315" width="9.0" height="1" fill="#f0f0f0"/>
<rect x="631.3" y="307" width="1.0" height="9" fill="#f0f0f0"/>
<text x="636.0999999999999" y="314.8" font-size="8.6" fill="#000" textLength="42" lengthAdjust="spacingAndGlyphs">Depressão</text>
<rect x="542" y="353" width="10" height="10" fill="#ffffff"/>
<rect x="542" y="353" width="10" height="1" fill="#a0a0a0"/>
<rect x="542" y="353" width="1" height="10" fill="#a0a0a0"/>
<rect x="543" y="354" width="8" height="1" fill="#696969"/>
<rect x="543" y="354" width="1" height="8" fill="#696969"/>
<rect x="543" y="362" width="9" height="1" fill="#f0f0f0"/>
<rect x="551" y="354" width="1" height="9" fill="#f0f0f0"/>
<path d="M544.5 358L546.3 360.3L550 355.8" fill="none" stroke="#000" stroke-width="1.6"/>
<text x="555.8" y="361.8" font-size="8.6" fill="#000" textLength="33.5" lengthAdjust="spacingAndGlyphs">Cirúrgia</text>
<rect x="621.9" y="346.8" width="200.3" height="27.0" fill="#ffffff"/>
<rect x="621.9" y="346.8" width="199.3" height="1.0" fill="#a0a0a0"/>
<rect x="621.9" y="346.8" width="1.0" height="26.0" fill="#a0a0a0"/>
<rect x="622.9" y="347.8" width="197.3" height="1.0" fill="#696969"/>
<rect x="622.9" y="347.8" width="1.0" height="24.0" fill="#696969"/>
<rect x="622.9" y="371.8" width="198.3" height="1.0" fill="#f0f0f0"/>
<rect x="820.2" y="347.8" width="1.0" height="25.0" fill="#f0f0f0"/>
<rect x="623.9" y="348.8" width="196.3" height="23.0" fill="#fff"/>
<text x="632.4" y="367.3" font-size="17" fill="#000" textLength="139.8" lengthAdjust="spacingAndGlyphs">Menisco esquerdo</text>
<rect x="844" y="353" width="10" height="10" fill="#ffffff"/>
<rect x="844" y="353" width="10" height="1" fill="#a0a0a0"/>
<rect x="844" y="353" width="1" height="10" fill="#a0a0a0"/>
<rect x="845" y="354" width="8" height="1" fill="#696969"/>
<rect x="845" y="354" width="1" height="8" fill="#696969"/>
<rect x="845" y="362" width="9" height="1" fill="#f0f0f0"/>
<rect x="853" y="354" width="1" height="9" fill="#f0f0f0"/>
<path d="M846.5 358L848.3 360.3L852 355.8" fill="none" stroke="#000" stroke-width="1.6"/>
<text x="857.8" y="361.8" font-size="8.6" fill="#000" textLength="47" lengthAdjust="spacingAndGlyphs">Cardiopatia</text>
<rect x="924" y="347" width="126.7" height="26.5" fill="#ffffff"/>
<rect x="924" y="347" width="125.7" height="1" fill="#a0a0a0"/>
<rect x="924" y="347" width="1" height="25.5" fill="#a0a0a0"/>
<rect x="925" y="348" width="123.7" height="1" fill="#696969"/>
<rect x="925" y="348" width="1" height="23.5" fill="#696969"/>
<rect x="925" y="371.5" width="124.7" height="1.0" fill="#f0f0f0"/>
<rect x="1048.7" y="348" width="1.0" height="24.5" fill="#f0f0f0"/>
<rect x="926" y="349" width="122.7" height="22.5" fill="#fff"/>
<text x="934" y="367.3" font-size="17" fill="#000" textLength="33" lengthAdjust="spacingAndGlyphs">HAS</text>
<rect x="1059.5" y="353" width="10.0" height="10" fill="#ffffff"/>
<rect x="1059.5" y="353" width="10.0" height="1" fill="#a0a0a0"/>
<rect x="1059.5" y="353" width="1.0" height="10" fill="#a0a0a0"/>
<rect x="1060.5" y="354" width="8.0" height="1" fill="#696969"/>
<rect x="1060.5" y="354" width="1.0" height="8" fill="#696969"/>
<rect x="1060.5" y="362" width="9.0" height="1" fill="#f0f0f0"/>
<rect x="1068.5" y="354" width="1.0" height="9" fill="#f0f0f0"/>
<path d="M1062.0 358L1063.8 360.3L1067.5 355.8" fill="none" stroke="#000" stroke-width="1.6"/>
<text x="1073.3" y="361.8" font-size="8.6" fill="#000" textLength="42.3" lengthAdjust="spacingAndGlyphs">Medicação</text>
<rect x="1139.2" y="347" width="220.8" height="26.5" fill="#ffffff"/>
<rect x="1139.2" y="347" width="219.8" height="1" fill="#a0a0a0"/>
<rect x="1139.2" y="347" width="1.0" height="25.5" fill="#a0a0a0"/>
<rect x="1140.2" y="348" width="217.8" height="1" fill="#696969"/>
<rect x="1140.2" y="348" width="1.0" height="23.5" fill="#696969"/>
<rect x="1140.2" y="371.5" width="218.8" height="1.0" fill="#f0f0f0"/>
<rect x="1358" y="348" width="1" height="24.5" fill="#f0f0f0"/>
<rect x="1141.2" y="349" width="216.8" height="22.5" fill="#fff"/>
<text x="1149" y="367.3" font-size="17" fill="#000" textLength="89.5" lengthAdjust="spacingAndGlyphs">Sirvastatina</text>
<rect x="917.6" y="306" width="10.0" height="10" fill="#ffffff"/>
<rect x="917.6" y="306" width="10.0" height="1" fill="#a0a0a0"/>
<rect x="917.6" y="306" width="1.0" height="10" fill="#a0a0a0"/>
<rect x="918.6" y="307" width="8.0" height="1" fill="#696969"/>
<rect x="918.6" y="307" width="1.0" height="8" fill="#696969"/>
<rect x="918.6" y="315" width="9.0" height="1" fill="#f0f0f0"/>
<rect x="926.6" y="307" width="1.0" height="9" fill="#f0f0f0"/>
<path d="M920.1 311L921.9 313.3L925.6 308.8" fill="none" stroke="#000" stroke-width="1.6"/>
<text x="931.4" y="314.8" font-size="8.6" fill="#000" textLength="35.3" lengthAdjust="spacingAndGlyphs">Diabetes</text>
<rect x="985.2" y="306" width="10.0" height="10" fill="#ffffff"/>
<rect x="985.2" y="306" width="10.0" height="1" fill="#a0a0a0"/>
<rect x="985.2" y="306" width="1.0" height="10" fill="#a0a0a0"/>
<rect x="986.2" y="307" width="8.0" height="1" fill="#696969"/>
<rect x="986.2" y="307" width="1.0" height="8" fill="#696969"/>
<rect x="986.2" y="315" width="9.0" height="1" fill="#f0f0f0"/>
<rect x="994.2" y="307" width="1.0" height="9" fill="#f0f0f0"/>
<path d="M987.7 311L989.5 313.3L993.2 308.8" fill="none" stroke="#000" stroke-width="1.6"/>
<text x="999.0" y="314.8" font-size="8.6" fill="#000" textLength="16.5" lengthAdjust="spacingAndGlyphs">HAS</text>
<rect x="1032.4" y="306" width="10.0" height="10" fill="#ffffff"/>
<rect x="1032.4" y="306" width="10.0" height="1" fill="#a0a0a0"/>
<rect x="1032.4" y="306" width="1.0" height="10" fill="#a0a0a0"/>
<rect x="1033.4" y="307" width="8.0" height="1" fill="#696969"/>
<rect x="1033.4" y="307" width="1.0" height="8" fill="#696969"/>
<rect x="1033.4" y="315" width="9.0" height="1" fill="#f0f0f0"/>
<rect x="1041.4" y="307" width="1.0" height="9" fill="#f0f0f0"/>
<path d="M1034.9 311L1036.7 313.3L1040.4 308.8" fill="none" stroke="#000" stroke-width="1.6"/>
<text x="1046.2" y="314.8" font-size="8.6" fill="#000" textLength="26.3" lengthAdjust="spacingAndGlyphs">Hérnia</text>
<rect x="1085.6" y="299.9" width="274.4" height="27.1" fill="#ffffff"/>
<rect x="1085.6" y="299.9" width="273.4" height="1.0" fill="#a0a0a0"/>
<rect x="1085.6" y="299.9" width="1.0" height="26.1" fill="#a0a0a0"/>
<rect x="1086.6" y="300.9" width="271.4" height="1.0" fill="#696969"/>
<rect x="1086.6" y="300.9" width="1.0" height="24.1" fill="#696969"/>
<rect x="1086.6" y="325" width="272.4" height="1" fill="#f0f0f0"/>
<rect x="1358" y="300.9" width="1" height="25.1" fill="#f0f0f0"/>
<rect x="1087.6" y="301.9" width="270.4" height="23.1" fill="#fff"/>
<text x="1095.5" y="320.5" font-size="17" fill="#000" textLength="104" lengthAdjust="spacingAndGlyphs">discal (L4:L5)</text>
<rect x="533.5" y="394.9" width="844.5" height="104.10000000000002" fill="none" stroke="#a0a0a0" stroke-width="1"/>
<rect x="534.5" y="395.9" width="844.5" height="104.10000000000002" fill="none" stroke="#ffffff" stroke-width="1" opacity="0.9"/>
<text x="546.6" y="412" font-size="9.6" fill="#000" textLength="71.5" lengthAdjust="spacingAndGlyphs">Patologia anterior</text>
<text x="641" y="412" font-size="9.6" fill="#000" textLength="31" lengthAdjust="spacingAndGlyphs">Grávida</text>
<text x="714.6" y="412" font-size="9.6" fill="#000" textLength="52.3" lengthAdjust="spacingAndGlyphs">Menstruação</text>
<rect x="548.3" y="422.4" width="10.0" height="10.0" fill="#ffffff"/>
<rect x="548.3" y="422.4" width="10.0" height="1.0" fill="#a0a0a0"/>
<rect x="548.3" y="422.4" width="1.0" height="10.0" fill="#a0a0a0"/>
<rect x="549.3" y="423.4" width="8.0" height="1.0" fill="#696969"/>
<rect x="549.3" y="423.4" width="1.0" height="8.0" fill="#696969"/>
<rect x="549.3" y="431.4" width="9.0" height="1.0" fill="#f0f0f0"/>
<rect x="557.3" y="423.4" width="1.0" height="9.0" fill="#f0f0f0"/>
<path d="M550.8 427.4L552.5999999999999 429.7L556.3 425.2" fill="none" stroke="#000" stroke-width="1.6"/>
<text x="562.0999999999999" y="431.2" font-size="8.6" fill="#000" textLength="32.5" lengthAdjust="spacingAndGlyphs">Pulmões</text>
<rect x="548.3" y="449.3" width="10.0" height="10.0" fill="#ffffff"/>
<rect x="548.3" y="449.3" width="10.0" height="1.0" fill="#a0a0a0"/>
<rect x="548.3" y="449.3" width="1.0" height="10.0" fill="#a0a0a0"/>
<rect x="549.3" y="450.3" width="8.0" height="1.0" fill="#696969"/>
<rect x="549.3" y="450.3" width="1.0" height="8.0" fill="#696969"/>
<rect x="549.3" y="458.3" width="9.0" height="1.0" fill="#f0f0f0"/>
<rect x="557.3" y="450.3" width="1.0" height="9.0" fill="#f0f0f0"/>
<path d="M550.8 454.3L552.5999999999999 456.6L556.3 452.1" fill="none" stroke="#000" stroke-width="1.6"/>
<text x="562.0999999999999" y="458.1" font-size="8.6" fill="#000" textLength="17.2" lengthAdjust="spacingAndGlyphs">Rins</text>
<rect x="548.3" y="476" width="10.0" height="10" fill="#ffffff"/>
<rect x="548.3" y="476" width="10.0" height="1" fill="#a0a0a0"/>
<rect x="548.3" y="476" width="1.0" height="10" fill="#a0a0a0"/>
<rect x="549.3" y="477" width="8.0" height="1" fill="#696969"/>
<rect x="549.3" y="477" width="1.0" height="8" fill="#696969"/>
<rect x="549.3" y="485" width="9.0" height="1" fill="#f0f0f0"/>
<rect x="557.3" y="477" width="1.0" height="9" fill="#f0f0f0"/>
<path d="M550.8 481L552.5999999999999 483.3L556.3 478.8" fill="none" stroke="#000" stroke-width="1.6"/>
<text x="562.0999999999999" y="484.8" font-size="8.6" fill="#000" textLength="28" lengthAdjust="spacingAndGlyphs">Fígado</text>
<rect x="636" y="422.4" width="10" height="10.0" fill="#ffffff"/>
<rect x="636" y="422.4" width="10" height="1.0" fill="#a0a0a0"/>
<rect x="636" y="422.4" width="1" height="10.0" fill="#a0a0a0"/>
<rect x="637" y="423.4" width="8" height="1.0" fill="#696969"/>
<rect x="637" y="423.4" width="1" height="8.0" fill="#696969"/>
<rect x="637" y="431.4" width="9" height="1.0" fill="#f0f0f0"/>
<rect x="645" y="423.4" width="1" height="9.0" fill="#f0f0f0"/>
<text x="649.8" y="431.2" font-size="8.6" fill="#000" textLength="16.3" lengthAdjust="spacingAndGlyphs">SIM</text>
<rect x="636" y="446.6" width="10" height="10.0" fill="#ffffff"/>
<rect x="636" y="446.6" width="10" height="1.0" fill="#a0a0a0"/>
<rect x="636" y="446.6" width="1" height="10.0" fill="#a0a0a0"/>
<rect x="637" y="447.6" width="8" height="1.0" fill="#696969"/>
<rect x="637" y="447.6" width="1" height="8.0" fill="#696969"/>
<rect x="637" y="455.6" width="9" height="1.0" fill="#f0f0f0"/>
<rect x="645" y="447.6" width="1" height="9.0" fill="#f0f0f0"/>
<path d="M638.5 451.6L640.3 453.90000000000003L644 449.40000000000003" fill="none" stroke="#000" stroke-width="1.6"/>
<text x="649.8" y="455.40000000000003" font-size="8.6" fill="#000" textLength="18" lengthAdjust="spacingAndGlyphs">NÃO</text>
<rect x="636" y="476" width="10" height="10" fill="#ffffff"/>
<rect x="636" y="476" width="10" height="1" fill="#a0a0a0"/>
<rect x="636" y="476" width="1" height="10" fill="#a0a0a0"/>
<rect x="637" y="477" width="8" height="1" fill="#696969"/>
<rect x="637" y="477" width="1" height="8" fill="#696969"/>
<rect x="637" y="485" width="9" height="1" fill="#f0f0f0"/>
<rect x="645" y="477" width="1" height="9" fill="#f0f0f0"/>
<text x="649.8" y="484.8" font-size="8.6" fill="#000" textLength="34.5" lengthAdjust="spacingAndGlyphs">Suspeita</text>
<rect x="716.6" y="422.4" width="10.0" height="10.0" fill="#ffffff"/>
<rect x="716.6" y="422.4" width="10.0" height="1.0" fill="#a0a0a0"/>
<rect x="716.6" y="422.4" width="1.0" height="10.0" fill="#a0a0a0"/>
<rect x="717.6" y="423.4" width="8.0" height="1.0" fill="#696969"/>
<rect x="717.6" y="423.4" width="1.0" height="8.0" fill="#696969"/>
<rect x="717.6" y="431.4" width="9.0" height="1.0" fill="#f0f0f0"/>
<rect x="725.6" y="423.4" width="1.0" height="9.0" fill="#f0f0f0"/>
<path d="M719.1 427.4L720.9 429.7L724.6 425.2" fill="none" stroke="#000" stroke-width="1.6"/>
<text x="730.4" y="431.2" font-size="8.6" fill="#000" textLength="30.3" lengthAdjust="spacingAndGlyphs">Regular</text>
<rect x="716.6" y="449.3" width="10.0" height="10.0" fill="#ffffff"/>
<rect x="716.6" y="449.3" width="10.0" height="1.0" fill="#a0a0a0"/>
<rect x="716.6" y="449.3" width="1.0" height="10.0" fill="#a0a0a0"/>
<rect x="717.6" y="450.3" width="8.0" height="1.0" fill="#696969"/>
<rect x="717.6" y="450.3" width="1.0" height="8.0" fill="#696969"/>
<rect x="717.6" y="458.3" width="9.0" height="1.0" fill="#f0f0f0"/>
<rect x="725.6" y="450.3" width="1.0" height="9.0" fill="#f0f0f0"/>
<text x="730.4" y="458.1" font-size="8.6" fill="#000" textLength="35.3" lengthAdjust="spacingAndGlyphs">Irregular</text>
<rect x="797" y="422.4" width="10" height="10.0" fill="#ffffff"/>
<rect x="797" y="422.4" width="10" height="1.0" fill="#a0a0a0"/>
<rect x="797" y="422.4" width="1" height="10.0" fill="#a0a0a0"/>
<rect x="798" y="423.4" width="8" height="1.0" fill="#696969"/>
<rect x="798" y="423.4" width="1" height="8.0" fill="#696969"/>
<rect x="798" y="431.4" width="9" height="1.0" fill="#f0f0f0"/>
<rect x="806" y="423.4" width="1" height="9.0" fill="#f0f0f0"/>
<text x="810.8" y="431.2" font-size="8.6" fill="#000" textLength="46.8" lengthAdjust="spacingAndGlyphs">Convulsões</text>
<rect x="797" y="449.3" width="10" height="10.0" fill="#ffffff"/>
<rect x="797" y="449.3" width="10" height="1.0" fill="#a0a0a0"/>
<rect x="797" y="449.3" width="1" height="10.0" fill="#a0a0a0"/>
<rect x="798" y="450.3" width="8" height="1.0" fill="#696969"/>
<rect x="798" y="450.3" width="1" height="8.0" fill="#696969"/>
<rect x="798" y="458.3" width="9" height="1.0" fill="#f0f0f0"/>
<rect x="806" y="450.3" width="1" height="9.0" fill="#f0f0f0"/>
<path d="M799.5 454.3L801.3 456.6L805 452.1" fill="none" stroke="#000" stroke-width="1.6"/>
<text x="810.8" y="458.1" font-size="8.6" fill="#000" textLength="60.5" lengthAdjust="spacingAndGlyphs">Cistos sinuviais</text>
<rect x="918.0" y="408.3" width="448.0" height="86.69999999999999" fill="none" stroke="#a0a0a0" stroke-width="1"/>
<rect x="919.0" y="409.3" width="448.0" height="86.69999999999999" fill="none" stroke="#ffffff" stroke-width="1" opacity="0.9"/>
<rect x="925.2" y="405.8" width="89.7" height="5.0" fill="#f0f0f0"/>
<text x="928.2" y="411.4" font-size="9.6" fill="#000" textLength="82.7" lengthAdjust="spacingAndGlyphs">Histórico de traumas</text>
<rect x="927" y="419" width="10" height="10" fill="#ffffff"/>
<rect x="927" y="419" width="10" height="1" fill="#a0a0a0"/>
<rect x="927" y="419" width="1" height="10" fill="#a0a0a0"/>
<rect x="928" y="420" width="8" height="1" fill="#696969"/>
<rect x="928" y="420" width="1" height="8" fill="#696969"/>
<rect x="928" y="428" width="9" height="1" fill="#f0f0f0"/>
<rect x="936" y="420" width="1" height="9" fill="#f0f0f0"/>
<path d="M929.5 424L931.3 426.3L935 421.8" fill="none" stroke="#000" stroke-width="1.6"/>
<text x="940.8" y="427.4" font-size="8.6" fill="#000" textLength="68" lengthAdjust="spacingAndGlyphs">Queda relevante</text>
<rect x="927" y="439.6" width="10" height="10.0" fill="#ffffff"/>
<rect x="927" y="439.6" width="10" height="1.0" fill="#a0a0a0"/>
<rect x="927" y="439.6" width="1" height="10.0" fill="#a0a0a0"/>
<rect x="928" y="440.6" width="8" height="1.0" fill="#696969"/>
<rect x="928" y="440.6" width="1" height="8.0" fill="#696969"/>
<rect x="928" y="448.6" width="9" height="1.0" fill="#f0f0f0"/>
<rect x="936" y="440.6" width="1" height="9.0" fill="#f0f0f0"/>
<text x="940.8" y="448.0" font-size="8.6" fill="#000" textLength="60.5" lengthAdjust="spacingAndGlyphs">Automobilístico</text>
<rect x="927" y="459.5" width="10" height="10.0" fill="#ffffff"/>
<rect x="927" y="459.5" width="10" height="1.0" fill="#a0a0a0"/>
<rect x="927" y="459.5" width="1" height="10.0" fill="#a0a0a0"/>
<rect x="928" y="460.5" width="8" height="1.0" fill="#696969"/>
<rect x="928" y="460.5" width="1" height="8.0" fill="#696969"/>
<rect x="928" y="468.5" width="9" height="1.0" fill="#f0f0f0"/>
<rect x="936" y="460.5" width="1" height="9.0" fill="#f0f0f0"/>
<text x="940.8" y="467.9" font-size="8.6" fill="#000" textLength="30" lengthAdjust="spacingAndGlyphs">Fratura</text>
<rect x="927" y="479.4" width="10" height="10.0" fill="#ffffff"/>
<rect x="927" y="479.4" width="10" height="1.0" fill="#a0a0a0"/>
<rect x="927" y="479.4" width="1" height="10.0" fill="#a0a0a0"/>
<rect x="928" y="480.4" width="8" height="1.0" fill="#696969"/>
<rect x="928" y="480.4" width="1" height="8.0" fill="#696969"/>
<rect x="928" y="488.4" width="9" height="1.0" fill="#f0f0f0"/>
<rect x="936" y="480.4" width="1" height="9.0" fill="#f0f0f0"/>
<text x="940.8" y="487.79999999999995" font-size="8.6" fill="#000" textLength="23.8" lengthAdjust="spacingAndGlyphs">Outro</text>
<rect x="1026.5" y="416" width="321.5" height="63.8" fill="#ffffff"/>
<rect x="1026.5" y="416" width="320.5" height="1" fill="#a0a0a0"/>
<rect x="1026.5" y="416" width="1.0" height="62.8" fill="#a0a0a0"/>
<rect x="1027.5" y="417" width="318.5" height="1" fill="#696969"/>
<rect x="1027.5" y="417" width="1.0" height="60.8" fill="#696969"/>
<rect x="1027.5" y="477.8" width="319.5" height="1.0" fill="#f0f0f0"/>
<rect x="1346" y="417" width="1" height="61.8" fill="#f0f0f0"/>
<rect x="1028.5" y="418" width="317.5" height="59.8" fill="#fff"/>
<text x="1036.3" y="435.3" font-size="16.2" fill="#000" textLength="121.5" lengthAdjust="spacingAndGlyphs">Fratura de femur</text>
<rect x="378.9" y="514.2" width="205.89999999999998" height="174.0999999999999" fill="none" stroke="#a0a0a0" stroke-width="1"/>
<rect x="379.9" y="515.2" width="205.89999999999998" height="174.0999999999999" fill="none" stroke="#ffffff" stroke-width="1" opacity="0.9"/>
<rect x="386.4" y="511.70000000000005" width="37.5" height="5.0" fill="#f0f0f0"/>
<text x="389.4" y="517.2" font-size="9.6" fill="#000" textLength="30.5" lengthAdjust="spacingAndGlyphs">Hábitos</text>
<rect x="386.1" y="528" width="34.1" height="33.8" fill="#696969"/>
<rect x="387.1" y="529" width="32.1" height="31.8" fill="#ffffff"/>
<rect x="387.1" y="559.8" width="32.1" height="1.0" fill="#e3e3e3"/>
<rect x="418.2" y="529" width="1.0" height="31.8" fill="#e3e3e3"/>
<g fill="#3d7ec8"><rect x="389.5" y="554" width="3" height="2.6"/><rect x="394" y="554" width="20" height="2.6"/><rect x="415" y="554" width="2.5" height="2.6"/><path d="M401 537Q400 532 404 532Q408 532 408 536Q411 537 412 540Q416 542 415 547L413.5 547Q413 543 410 543Q406 544 403 542Q400 540 401 537Z"/></g>
<text x="426.9" y="537.5" font-size="9.6" fill="#000" textLength="38" lengthAdjust="spacingAndGlyphs">Tabagista</text>
<rect x="427.8" y="549" width="10.0" height="10" fill="#ffffff"/>
<rect x="427.8" y="549" width="10.0" height="1" fill="#a0a0a0"/>
<rect x="427.8" y="549" width="1.0" height="10" fill="#a0a0a0"/>
<rect x="428.8" y="550" width="8.0" height="1" fill="#696969"/>
<rect x="428.8" y="550" width="1.0" height="8" fill="#696969"/>
<rect x="428.8" y="558" width="9.0" height="1" fill="#f0f0f0"/>
<rect x="436.8" y="550" width="1.0" height="9" fill="#f0f0f0"/>
<path d="M430.3 554L432.1 556.3L435.8 551.8" fill="none" stroke="#000" stroke-width="1.6"/>
<text x="441.6" y="557.6" font-size="9" fill="#000" textLength="15.5" lengthAdjust="spacingAndGlyphs">SIM</text>
<rect x="468" y="549" width="10" height="10" fill="#ffffff"/>
<rect x="468" y="549" width="10" height="1" fill="#a0a0a0"/>
<rect x="468" y="549" width="1" height="10" fill="#a0a0a0"/>
<rect x="469" y="550" width="8" height="1" fill="#696969"/>
<rect x="469" y="550" width="1" height="8" fill="#696969"/>
<rect x="469" y="558" width="9" height="1" fill="#f0f0f0"/>
<rect x="477" y="550" width="1" height="9" fill="#f0f0f0"/>
<text x="481.8" y="557.6" font-size="9" fill="#000" textLength="18" lengthAdjust="spacingAndGlyphs">NÃO</text>
<text x="513.8" y="537.5" font-size="9.6" fill="#000" textLength="33.3" lengthAdjust="spacingAndGlyphs">Qtd/ Dia</text>
<rect x="507.2" y="541.9" width="46.6" height="26.7" fill="#ffffff"/>
<rect x="507.2" y="541.9" width="45.6" height="1.0" fill="#a0a0a0"/>
<rect x="507.2" y="541.9" width="1.0" height="25.7" fill="#a0a0a0"/>
<rect x="508.2" y="542.9" width="43.6" height="1.0" fill="#696969"/>
<rect x="508.2" y="542.9" width="1.0" height="23.7" fill="#696969"/>
<rect x="508.2" y="566.6" width="44.6" height="1.0" fill="#f0f0f0"/>
<rect x="551.8" y="542.9" width="1.0" height="24.7" fill="#f0f0f0"/>
<rect x="509.2" y="543.9" width="42.6" height="22.7" fill="#fff"/>
<text x="517" y="562.4" font-size="20.5" fill="#000" textLength="19.3" lengthAdjust="spacingAndGlyphs">20</text>
<rect x="386.1" y="588.9" width="34.1" height="33.4" fill="#696969"/>
<rect x="387.1" y="589.9" width="32.1" height="31.4" fill="#ffffff"/>
<rect x="387.1" y="620.3" width="32.1" height="1.0" fill="#e3e3e3"/>
<rect x="418.2" y="589.9" width="1.0" height="31.4" fill="#e3e3e3"/>
<g fill="#3d7ec8"><rect x="389" y="602" width="2" height="15"/><rect x="389" y="610" width="29" height="2.2"/><rect x="400" y="604" width="17" height="7"/><rect x="415.5" y="604" width="2" height="13"/><circle cx="395" cy="605" r="2"/></g>
<text x="426.9" y="598.1" font-size="9.6" fill="#000" textLength="73.5" lengthAdjust="spacingAndGlyphs">Qualidade do sono</text>
<rect x="427.8" y="609.6" width="10.0" height="10.0" fill="#ffffff"/>
<rect x="427.8" y="609.6" width="10.0" height="1.0" fill="#a0a0a0"/>
<rect x="427.8" y="609.6" width="1.0" height="10.0" fill="#a0a0a0"/>
<rect x="428.8" y="610.6" width="8.0" height="1.0" fill="#696969"/>
<rect x="428.8" y="610.6" width="1.0" height="8.0" fill="#696969"/>
<rect x="428.8" y="618.6" width="9.0" height="1.0" fill="#f0f0f0"/>
<rect x="436.8" y="610.6" width="1.0" height="9.0" fill="#f0f0f0"/>
<path d="M430.3 614.6L432.1 616.9L435.8 612.4" fill="none" stroke="#000" stroke-width="1.6"/>
<text x="441.6" y="618.2" font-size="9" fill="#000" textLength="15.8" lengthAdjust="spacingAndGlyphs">Boa</text>
<rect x="475.2" y="609.6" width="10.0" height="10.0" fill="#ffffff"/>
<rect x="475.2" y="609.6" width="10.0" height="1.0" fill="#a0a0a0"/>
<rect x="475.2" y="609.6" width="1.0" height="10.0" fill="#a0a0a0"/>
<rect x="476.2" y="610.6" width="8.0" height="1.0" fill="#696969"/>
<rect x="476.2" y="610.6" width="1.0" height="8.0" fill="#696969"/>
<rect x="476.2" y="618.6" width="9.0" height="1.0" fill="#f0f0f0"/>
<rect x="484.2" y="610.6" width="1.0" height="9.0" fill="#f0f0f0"/>
<text x="489.0" y="618.2" font-size="9" fill="#000" textLength="20" lengthAdjust="spacingAndGlyphs">Ruim</text>
<text x="520.4" y="598.1" font-size="9.6" fill="#000" textLength="41.5" lengthAdjust="spacingAndGlyphs">Horas/ Dia</text>
<rect x="521" y="602.5" width="46.3" height="26.8" fill="#ffffff"/>
<rect x="521" y="602.5" width="45.3" height="1.0" fill="#a0a0a0"/>
<rect x="521" y="602.5" width="1" height="25.8" fill="#a0a0a0"/>
<rect x="522" y="603.5" width="43.3" height="1.0" fill="#696969"/>
<rect x="522" y="603.5" width="1" height="23.8" fill="#696969"/>
<rect x="522" y="627.3" width="44.3" height="1.0" fill="#f0f0f0"/>
<rect x="565.3" y="603.5" width="1.0" height="24.8" fill="#f0f0f0"/>
<rect x="523" y="604.5" width="42.3" height="22.8" fill="#fff"/>
<text x="530.6" y="622.6" font-size="20.2" fill="#000" textLength="10" lengthAdjust="spacingAndGlyphs">8</text>
<rect x="386.1" y="642.2" width="34.1" height="33.8" fill="#696969"/>
<rect x="387.1" y="643.2" width="32.1" height="31.8" fill="#ffffff"/>
<rect x="387.1" y="674" width="32.1" height="1" fill="#e3e3e3"/>
<rect x="418.2" y="643.2" width="1.0" height="31.8" fill="#e3e3e3"/>
<g fill="#3d7ec8" stroke="none"><circle cx="403.1" cy="650.2" r="2.3"/><rect x="393.1" y="653.2" width="20" height="2.6"/><rect x="400.6" y="653.2" width="5" height="10"/><rect x="400.6" y="662.2" width="2.3" height="11"/><rect x="403.40000000000003" y="662.2" width="2.3" height="11"/></g>
<g fill="none" stroke="#3d7ec8" stroke-width="1"><circle cx="393.1" cy="654.2" r="2"/><circle cx="413.1" cy="654.2" r="2"/><path d="M393.1 652.2V647.2M413.1 652.2V647.2"/></g>
<text x="426.9" y="651.7" font-size="9.6" fill="#000" textLength="47" lengthAdjust="spacingAndGlyphs">é praticante</text>
<rect x="427.8" y="662.5" width="10.0" height="10.0" fill="#ffffff"/>
<rect x="427.8" y="662.5" width="10.0" height="1.0" fill="#a0a0a0"/>
<rect x="427.8" y="662.5" width="1.0" height="10.0" fill="#a0a0a0"/>
<rect x="428.8" y="663.5" width="8.0" height="1.0" fill="#696969"/>
<rect x="428.8" y="663.5" width="1.0" height="8.0" fill="#696969"/>
<rect x="428.8" y="671.5" width="9.0" height="1.0" fill="#f0f0f0"/>
<rect x="436.8" y="663.5" width="1.0" height="9.0" fill="#f0f0f0"/>
<path d="M430.3 667.5L432.1 669.8L435.8 665.3" fill="none" stroke="#000" stroke-width="1.6"/>
<text x="441.6" y="670.9" font-size="9" fill="#000" textLength="15.5" lengthAdjust="spacingAndGlyphs">SIM</text>
<rect x="468" y="662.5" width="10" height="10.0" fill="#ffffff"/>
<rect x="468" y="662.5" width="10" height="1.0" fill="#a0a0a0"/>
<rect x="468" y="662.5" width="1" height="10.0" fill="#a0a0a0"/>
<rect x="469" y="663.5" width="8" height="1.0" fill="#696969"/>
<rect x="469" y="663.5" width="1" height="8.0" fill="#696969"/>
<rect x="469" y="671.5" width="9" height="1.0" fill="#f0f0f0"/>
<rect x="477" y="663.5" width="1" height="9.0" fill="#f0f0f0"/>
<text x="481.8" y="670.9" font-size="9" fill="#000" textLength="18" lengthAdjust="spacingAndGlyphs">NÃO</text>
<rect x="600.4" y="514.2" width="521.9" height="174.0999999999999" fill="none" stroke="#a0a0a0" stroke-width="1"/>
<rect x="601.4" y="515.2" width="521.9" height="174.0999999999999" fill="none" stroke="#ffffff" stroke-width="1" opacity="0.9"/>
<rect x="607.4" y="511.70000000000005" width="74.0" height="5.0" fill="#f0f0f0"/>
<text x="610.4" y="517.5" font-size="9.6" fill="#000" textLength="67" lengthAdjust="spacingAndGlyphs">Exercícios físicos</text>
<rect x="608.2" y="528" width="33.7" height="33.8" fill="#696969"/>
<rect x="609.2" y="529" width="31.7" height="31.8" fill="#ffffff"/>
<rect x="609.2" y="559.8" width="31.7" height="1.0" fill="#e3e3e3"/>
<rect x="639.9" y="529" width="1.0" height="31.8" fill="#e3e3e3"/>
<g fill="#3d7ec8" stroke="none"><circle cx="625" cy="536" r="2.3"/><rect x="615" y="539" width="20" height="2.6"/><rect x="622.5" y="539" width="5" height="10"/><rect x="622.5" y="548" width="2.3" height="11"/><rect x="625.3" y="548" width="2.3" height="11"/></g>
<g fill="none" stroke="#3d7ec8" stroke-width="1"><circle cx="615" cy="540" r="2"/><circle cx="635" cy="540" r="2"/><path d="M615 538V533M635 538V533"/></g>
<text x="654.5" y="530.9" font-size="9.6" fill="#000" textLength="44.5" lengthAdjust="spacingAndGlyphs">Modalidade</text>
<rect x="655" y="539.2" width="260.3" height="21.6" fill="#ffffff"/>
<rect x="655" y="539.2" width="259.3" height="1.0" fill="#a0a0a0"/>
<rect x="655" y="539.2" width="1" height="20.6" fill="#a0a0a0"/>
<rect x="656" y="540.2" width="257.3" height="1.0" fill="#696969"/>
<rect x="656" y="540.2" width="1" height="18.6" fill="#696969"/>
<rect x="656" y="558.8" width="258.3" height="1.0" fill="#f0f0f0"/>
<rect x="913.3" y="540.2" width="1.0" height="19.6" fill="#f0f0f0"/>
<rect x="657" y="541.2" width="256.3" height="17.6" fill="#fff"/>
<rect x="900.8" y="541.2" width="14.5" height="19.6" fill="#696969"/>
<rect x="900.8" y="541.2" width="13.5" height="18.6" fill="#ffffff"/>
<rect x="901.8" y="542.2" width="12.5" height="17.6" fill="#a0a0a0"/>
<rect x="901.8" y="542.2" width="11.5" height="16.6" fill="#e3e3e3"/>
<rect x="902.8" y="543.2" width="10.5" height="15.6" fill="#f0f0f0"/>
<path d="M905.05 550.0H911.05L908.05 553.0Z" fill="#000"/>
<text x="941.6" y="530.9" font-size="9.6" fill="#000" text-anchor="middle" textLength="23.5" lengthAdjust="spacingAndGlyphs">Horas</text>
<rect x="924" y="535.3" width="33.2" height="26.7" fill="#ffffff"/>
<rect x="924" y="535.3" width="32.2" height="1.0" fill="#a0a0a0"/>
<rect x="924" y="535.3" width="1" height="25.7" fill="#a0a0a0"/>
<rect x="925" y="536.3" width="30.2" height="1.0" fill="#696969"/>
<rect x="925" y="536.3" width="1" height="23.7" fill="#696969"/>
<rect x="925" y="560" width="31.2" height="1" fill="#f0f0f0"/>
<rect x="955.2" y="536.3" width="1.0" height="24.7" fill="#f0f0f0"/>
<rect x="926" y="537.3" width="29.2" height="22.7" fill="#fff"/>
<text x="970.3" y="530.9" font-size="9.6" fill="#000" textLength="57.5" lengthAdjust="spacingAndGlyphs">X  por semana</text>
<rect x="971" y="535.3" width="33" height="26.7" fill="#ffffff"/>
<rect x="971" y="535.3" width="32" height="1.0" fill="#a0a0a0"/>
<rect x="971" y="535.3" width="1" height="25.7" fill="#a0a0a0"/>
<rect x="972" y="536.3" width="30" height="1.0" fill="#696969"/>
<rect x="972" y="536.3" width="1" height="23.7" fill="#696969"/>
<rect x="972" y="560" width="31" height="1" fill="#f0f0f0"/>
<rect x="1002" y="536.3" width="1" height="24.7" fill="#f0f0f0"/>
<rect x="973" y="537.3" width="29" height="22.7" fill="#fff"/>
<rect x="1003.8" y="535.3" width="28.0" height="26.7" fill="#696969"/>
<rect x="1003.8" y="535.3" width="27.0" height="25.7" fill="#ffffff"/>
<rect x="1004.8" y="536.3" width="26.0" height="24.7" fill="#a0a0a0"/>
<rect x="1004.8" y="536.3" width="25.0" height="23.7" fill="#e3e3e3"/>
<rect x="1005.8" y="537.3" width="24.0" height="22.7" fill="#e1e1e1"/>
<path d="M1010.5 551.5L1017.8 544.5L1025 551.5" fill="none" stroke="#000" stroke-width="1.4"/>
<text x="1061.2" y="530.9" font-size="9.6" fill="#000" text-anchor="middle" textLength="21.5" lengthAdjust="spacingAndGlyphs">Met's</text>
<rect x="1044.9" y="535.3" width="33.3" height="26.7" fill="#ffffff"/>
<rect x="1044.9" y="535.3" width="32.3" height="1.0" fill="#a0a0a0"/>
<rect x="1044.9" y="535.3" width="1.0" height="25.7" fill="#a0a0a0"/>
<rect x="1045.9" y="536.3" width="30.3" height="1.0" fill="#696969"/>
<rect x="1045.9" y="536.3" width="1.0" height="23.7" fill="#696969"/>
<rect x="1045.9" y="560" width="31.3" height="1" fill="#f0f0f0"/>
<rect x="1076.2" y="536.3" width="1.0" height="24.7" fill="#f0f0f0"/>
<rect x="1046.9" y="537.3" width="29.3" height="22.7" fill="#fff"/>
<rect x="1085" y="535.3" width="27.3" height="26.7" fill="#696969"/>
<rect x="1085" y="535.3" width="26.3" height="25.7" fill="#ffffff"/>
<rect x="1086" y="536.3" width="25.3" height="24.7" fill="#a0a0a0"/>
<rect x="1086" y="536.3" width="24.3" height="23.7" fill="#e3e3e3"/>
<rect x="1087" y="537.3" width="23.3" height="22.7" fill="#e1e1e1"/>
<circle cx="1098.65" cy="548.65" r="8.2" fill="#3c7fcf"/>
<text x="1098.65" y="553.25" font-size="13" fill="#fff" font-weight="700" text-anchor="middle">?</text>
<text x="608.7" y="577.6" font-size="9.6" fill="#7f7f7f" font-style="italic" textLength="22.5" lengthAdjust="spacingAndGlyphs">vezes</text>
<text x="641.3" y="577.6" font-size="9.6" fill="#7f7f7f" font-style="italic" textLength="46" lengthAdjust="spacingAndGlyphs">modalidade</text>
<text x="802.3" y="577.6" font-size="9.6" fill="#7f7f7f" font-style="italic" textLength="22" lengthAdjust="spacingAndGlyphs">horas</text>
<text x="832" y="577.6" font-size="9.6" fill="#7f7f7f" font-style="italic" textLength="20.5" lengthAdjust="spacingAndGlyphs">Met's</text>
<text x="864" y="577.6" font-size="9.6" fill="#7f7f7f" font-style="italic" textLength="22.5" lengthAdjust="spacingAndGlyphs">vezes</text>
<text x="896.4" y="577.6" font-size="9.6" fill="#7f7f7f" font-style="italic" textLength="46" lengthAdjust="spacingAndGlyphs">modalidade</text>
<text x="1058" y="577.6" font-size="9.6" fill="#7f7f7f" font-style="italic" textLength="22" lengthAdjust="spacingAndGlyphs">horas</text>
<text x="1087.2" y="577.6" font-size="9.6" fill="#7f7f7f" font-style="italic" textLength="20.5" lengthAdjust="spacingAndGlyphs">Met's</text>
<text x="618.8" y="592.6" font-size="9.6" fill="#2b7fd6" text-anchor="middle">5</text>
<text x="642.4" y="592.6" font-size="9.6" fill="#2b7fd6" textLength="75.5" lengthAdjust="spacingAndGlyphs">musculação (LEVE)</text>
<text x="814" y="592.6" font-size="9.6" fill="#2b7fd6" text-anchor="middle">1</text>
<text x="837.6" y="592.6" font-size="9.6" fill="#2b7fd6" textLength="13.5" lengthAdjust="spacingAndGlyphs">3,0</text>
<text x="874.3" y="592.6" font-size="9.6" fill="#2b7fd6" text-anchor="middle">5</text>
<text x="898" y="592.6" font-size="9.6" fill="#2b7fd6" textLength="96.5" lengthAdjust="spacingAndGlyphs">caminhada (VIGOROSA)</text>
<text x="1069.1" y="592.6" font-size="9.6" fill="#2b7fd6" text-anchor="middle">1</text>
<text x="1092.7" y="592.6" font-size="9.6" fill="#2b7fd6" textLength="13.5" lengthAdjust="spacingAndGlyphs">4,5</text>
<text x="618.8" y="612.9" font-size="9.6" fill="#2b7fd6" text-anchor="middle">2</text>
<text x="642.4" y="612.9" font-size="9.6" fill="#2b7fd6" textLength="56.5" lengthAdjust="spacingAndGlyphs">futebol (LEVE)</text>
<text x="814" y="612.9" font-size="9.6" fill="#2b7fd6" text-anchor="middle">1</text>
<text x="837.6" y="612.9" font-size="9.6" fill="#2b7fd6" textLength="13.5" lengthAdjust="spacingAndGlyphs">4,0</text>
<text x="874.3" y="612.9" font-size="9.6" fill="#2b7fd6" text-anchor="middle">3</text>
<text x="898" y="612.9" font-size="9.6" fill="#2b7fd6" textLength="90.5" lengthAdjust="spacingAndGlyphs">natação (MODERADA)</text>
<text x="1069.1" y="612.9" font-size="9.6" fill="#2b7fd6" text-anchor="middle">1</text>
<text x="1092.7" y="612.9" font-size="9.6" fill="#2b7fd6" textLength="13.5" lengthAdjust="spacingAndGlyphs">8,0</text>
<rect x="1145.0" y="514.5" width="232.5" height="139.5" fill="none" stroke="#a0a0a0" stroke-width="1"/>
<rect x="1146.0" y="515.5" width="232.5" height="139.5" fill="none" stroke="#ffffff" stroke-width="1" opacity="0.9"/>
<rect x="1151.9" y="512" width="67.0" height="5" fill="#f0f0f0"/>
<text x="1154.9" y="517.2" font-size="9.6" fill="#2b7fd6" textLength="60" lengthAdjust="spacingAndGlyphs">Realizar testes</text>
<rect x="1152.3" y="521.6" width="219.7" height="40.0" fill="url(#bang2)"/>
<rect x="1156.15" y="525.35" width="31.899999999999864" height="32.69999999999993" fill="none" stroke="#8fbfa0" stroke-width="1.5" rx="1"/>
<g fill="#a9d1b3">
<circle cx="1160.08" cy="528.02" r="0.73"/>
<rect x="1159.41" y="529.05" width="1.34" height="3.08"/>
<circle cx="1163.08" cy="528.02" r="0.73"/>
<rect x="1162.41" y="529.05" width="1.34" height="3.08"/>
<circle cx="1166.09" cy="528.02" r="0.73"/>
<rect x="1165.42" y="529.05" width="1.34" height="3.08"/>
<circle cx="1169.09" cy="528.02" r="0.73"/>
<rect x="1168.43" y="529.05" width="1.34" height="3.08"/>
<circle cx="1172.10" cy="528.02" r="0.73"/>
<rect x="1171.43" y="529.05" width="1.34" height="3.08"/>
<circle cx="1175.11" cy="528.02" r="0.73"/>
<rect x="1174.44" y="529.05" width="1.34" height="3.08"/>
<circle cx="1178.11" cy="528.02" r="0.73"/>
<rect x="1177.44" y="529.05" width="1.34" height="3.08"/>
<circle cx="1181.12" cy="528.02" r="0.73"/>
<rect x="1180.45" y="529.05" width="1.34" height="3.08"/>
<circle cx="1184.12" cy="528.02" r="0.73"/>
<rect x="1183.46" y="529.05" width="1.34" height="3.08"/>
<rect x="1158.41" y="530.41" width="27.39" height="0.41"/>
<rect x="1158.41" y="534.52" width="9.35" height="2.05"/>
<rect x="1158.41" y="537.42" width="11.36" height="2.05"/>
<rect x="1158.41" y="540.33" width="14.03" height="2.05"/>
<rect x="1158.41" y="543.24" width="16.70" height="2.05"/>
<circle cx="1180.12" cy="537.60" r="3.34" fill="none" stroke="#a9d1b3" stroke-width="2.34"/>
<path d="M1180.12 534.26A3.34 3.34 0 0 1 1183.46 537.60" fill="none" stroke="#b07ab8" stroke-width="2.34"/>
<rect x="1159.41" y="552.30" width="4.34" height="1.71"/>
<rect x="1164.75" y="551.28" width="4.34" height="2.74"/>
<rect x="1170.10" y="549.22" width="4.34" height="4.79"/>
<rect x="1175.44" y="547.51" width="4.34" height="6.50"/>
<rect x="1180.78" y="545.80" width="4.34" height="8.21"/>
</g>
<text x="1190.9" y="539.3" font-size="12.5" fill="#fff" font-weight="700" font-style="italic" textLength="141" lengthAdjust="spacingAndGlyphs">Composition Work-Test</text>
<rect x="1191" y="546.4" width="142.5" height="1.0" fill="#c9d7ee"/>
<text x="1194.7" y="558.3" font-size="9.7" fill="#fff" textLength="86.5" lengthAdjust="spacingAndGlyphs">Professional Edition</text>
<rect x="1160.4" y="574.8" width="10.0" height="10.0" fill="#ffffff"/>
<rect x="1160.4" y="574.8" width="10.0" height="1.0" fill="#a0a0a0"/>
<rect x="1160.4" y="574.8" width="1.0" height="10.0" fill="#a0a0a0"/>
<rect x="1161.4" y="575.8" width="8.0" height="1.0" fill="#696969"/>
<rect x="1161.4" y="575.8" width="1.0" height="8.0" fill="#696969"/>
<rect x="1161.4" y="583.8" width="9.0" height="1.0" fill="#f0f0f0"/>
<rect x="1169.4" y="575.8" width="1.0" height="9.0" fill="#f0f0f0"/>
<path d="M1162.9 579.8L1164.7 582.0999999999999L1168.4 577.5999999999999" fill="none" stroke="#000" stroke-width="1.6"/>
<text x="1174.2" y="583.6999999999999" font-size="8.9" fill="#2b7fd6" textLength="62" lengthAdjust="spacingAndGlyphs">Circunferências</text>
<rect x="1160.4" y="602" width="10.0" height="10" fill="#ffffff"/>
<rect x="1160.4" y="602" width="10.0" height="1" fill="#a0a0a0"/>
<rect x="1160.4" y="602" width="1.0" height="10" fill="#a0a0a0"/>
<rect x="1161.4" y="603" width="8.0" height="1" fill="#696969"/>
<rect x="1161.4" y="603" width="1.0" height="8" fill="#696969"/>
<rect x="1161.4" y="611" width="9.0" height="1" fill="#f0f0f0"/>
<rect x="1169.4" y="603" width="1.0" height="9" fill="#f0f0f0"/>
<path d="M1162.9 607L1164.7 609.3L1168.4 604.8" fill="none" stroke="#000" stroke-width="1.6"/>
<text x="1174.2" y="610.9" font-size="8.9" fill="#2b7fd6" textLength="56" lengthAdjust="spacingAndGlyphs">Bioimpedância</text>
<rect x="1160.4" y="628.8" width="10.0" height="10.0" fill="#ffffff"/>
<rect x="1160.4" y="628.8" width="10.0" height="1.0" fill="#a0a0a0"/>
<rect x="1160.4" y="628.8" width="1.0" height="10.0" fill="#a0a0a0"/>
<rect x="1161.4" y="629.8" width="8.0" height="1.0" fill="#696969"/>
<rect x="1161.4" y="629.8" width="1.0" height="8.0" fill="#696969"/>
<rect x="1161.4" y="637.8" width="9.0" height="1.0" fill="#f0f0f0"/>
<rect x="1169.4" y="629.8" width="1.0" height="9.0" fill="#f0f0f0"/>
<path d="M1162.9 633.8L1164.7 636.0999999999999L1168.4 631.5999999999999" fill="none" stroke="#000" stroke-width="1.6"/>
<text x="1174.2" y="637.6999999999999" font-size="8.9" fill="#2b7fd6" textLength="68.5" lengthAdjust="spacingAndGlyphs">Dobras cutanêas</text>
<rect x="1280.4" y="575.3" width="86.9" height="26.9" fill="#696969"/>
<rect x="1280.4" y="575.3" width="85.9" height="25.9" fill="#ffffff"/>
<rect x="1281.4" y="576.3" width="84.9" height="24.9" fill="#a0a0a0"/>
<rect x="1281.4" y="576.3" width="83.9" height="23.9" fill="#e3e3e3"/>
<rect x="1282.4" y="577.3" width="82.9" height="22.9" fill="#e1e1e1"/>
<text x="1287.7" y="593.8" font-size="12" fill="#000" textLength="71.5" lengthAdjust="spacingAndGlyphs">Observações</text>
<rect x="1280.4" y="615.9" width="86.9" height="26.8" fill="#696969"/>
<rect x="1280.4" y="615.9" width="85.9" height="25.8" fill="#ffffff"/>
<rect x="1281.4" y="616.9" width="84.9" height="24.8" fill="#a0a0a0"/>
<rect x="1281.4" y="616.9" width="83.9" height="23.8" fill="#e3e3e3"/>
<rect x="1282.4" y="617.9" width="82.9" height="22.8" fill="#e1e1e1"/>
<text x="1301.2" y="633.9" font-size="12" fill="#000" textLength="44.5" lengthAdjust="spacingAndGlyphs">Avançar</text>
<rect x="1144.5" y="663" width="233.5" height="26.3" fill="#ffffff"/>
<rect x="1144.5" y="663" width="232.5" height="1" fill="#a0a0a0"/>
<rect x="1144.5" y="663" width="1.0" height="25.3" fill="#a0a0a0"/>
<rect x="1145.5" y="664" width="230.5" height="1" fill="#696969"/>
<rect x="1145.5" y="664" width="1.0" height="23.3" fill="#696969"/>
<rect x="1145.5" y="687.3" width="231.5" height="1.0" fill="#f0f0f0"/>
<rect x="1376" y="664" width="1" height="24.3" fill="#f0f0f0"/>
<rect x="1146.5" y="665" width="229.5" height="22.3" fill="#fff"/>
<text x="1180.7" y="678.8" font-size="12.5" fill="#000" textLength="167" lengthAdjust="spacingAndGlyphs">C:\Users\pc\Desktop\Perfil.jpg</text>
<rect x="0" y="846" width="1600" height="2" fill="#fafafa"/>
<rect x="0" y="848" width="1600" height="25" fill="#efefef"/>
<rect x="27" y="851" width="1566" height="17" rx="8.5" fill="#f6f6f6"/>
<circle cx="13.5" cy="857" r="1" fill="#111"/>
<circle cx="13.5" cy="860.5" r="1" fill="#111"/>
<circle cx="13.5" cy="864" r="1" fill="#111"/>
<path d="M31 859.5L37 855.8V863.2Z" fill="#6b6b6b"/>
<rect x="41" y="856" width="1346" height="7" rx="3.5" fill="#767676"/>
<path d="M1592.8 859.5L1586.5 855.8V863.2Z" fill="#6b6b6b"/>
<rect x="0" y="872" width="1600" height="1" fill="#ffffff"/>
<rect x="0" y="873" width="1600" height="34" fill="#1f1f1e"/>
<rect x="412" y="873" width="40" height="34" fill="#3b3b3b"/>
<rect x="169" y="905" width="32" height="2" fill="#76b9ed"/>
<rect x="374" y="905" width="33" height="2" fill="#76b9ed"/>
<rect x="412" y="905" width="40" height="2" fill="#76b9ed"/>
<rect x="622" y="905" width="33" height="2" fill="#76b9ed"/>
<g fill="#f2f2f2"><path d="M13.5 884.5L19.3 883.7V889.5H13.5Z"/><path d="M20.3 883.5L27 882.6V889.5H20.3Z"/><path d="M13.5 890.5H19.3V896.3L13.5 895.5Z"/><path d="M20.3 890.5H27V897.4L20.3 896.5Z"/></g>
<circle cx="61.5" cy="888" r="6" fill="none" stroke="#f2f2f2" stroke-width="1.7"/><path d="M57.5 892.5L52 898" stroke="#f2f2f2" stroke-width="2" stroke-linecap="round"/>
<circle cx="104" cy="889.7" r="9.8" fill="#ed6c47"/><path d="M104 879.9A9.8 9.8 0 0 1 113.8 889.7H104Z" fill="#ff8f6b"/><rect x="92.5" y="883.5" width="10.5" height="12.5" rx="1" fill="#c43e1c"/><text x="97.8" y="893.6" font-size="9" font-weight="700" fill="#fff" text-anchor="middle">P</text>
<circle cx="144.5" cy="889.7" r="9.2" fill="#302e31" stroke="#c4c4c4" stroke-width="1.3"/><g fill="#d0d0d0"><circle cx="144.5" cy="885" r="2.6"/><circle cx="140.3" cy="892" r="2.6"/><circle cx="148.7" cy="892" r="2.6"/></g><circle cx="144.5" cy="889.7" r="2.2" fill="#302e31"/>
<path d="M176.5 883H184L186 885H194V897H176.5Z" fill="#f7c342"/><rect x="176.5" y="886.5" width="17.5" height="10.5" fill="#ffd75e"/><path d="M180.5 897V891.5H190V897H187.3V894H183.2V897Z" fill="#1e88e5"/>
<rect x="218.5" y="881.5" width="17" height="16.5" rx="2" fill="#001e36" stroke="#31a8ff" stroke-width="1.3"/><text x="227" y="893.3" font-size="9.5" font-weight="700" fill="#31a8ff" text-anchor="middle">Ps</text>
<rect x="259.5" y="881.5" width="17" height="16.5" rx="1" fill="#001e36" stroke="#9bc3e6" stroke-width="1.3"/><text x="268" y="893.3" font-size="9.5" font-weight="700" fill="#9bc3e6" text-anchor="middle">Lr</text>
<rect x="300.5" y="881.5" width="17" height="16.5" rx="1" fill="#2a0033" stroke="#d87cff" stroke-width="1.3"/><text x="309" y="893.3" font-size="9.5" font-weight="700" fill="#d87cff" text-anchor="middle">Pr</text>
<path d="M341 896L345 882L356 884L352 898Z" fill="#bfe3ee"/><path d="M345 882L356 884L355.5 886L344.6 884Z" fill="#7cc0d8"/>
<circle cx="391" cy="889.5" r="9.5" fill="#db4437"/><path d="M391 889.5L382.8 894.2A9.5 9.5 0 0 0 396.5 897.3Z" fill="#0f9d58"/><path d="M391 889.5L400.5 889.5A9.5 9.5 0 0 1 396.5 897.3Z" fill="#ffcd40"/><circle cx="391" cy="889.5" r="4" fill="#fff"/><circle cx="391" cy="889.5" r="3" fill="#4285f4"/><circle cx="395.5" cy="894" r="5" fill="#2a2a2a"/><circle cx="395.5" cy="892.5" r="2" fill="#c79a7e"/>
<rect x="424" y="880.5" width="15.5" height="17.5" rx="1" fill="#21a366"/><rect x="424" y="880.5" width="15.5" height="6" fill="#33c481"/><rect x="424" y="892" width="15.5" height="6" fill="#185c37"/><rect x="420" y="884" width="10" height="10.5" rx="1" fill="#107c41"/><text x="425" y="892.3" font-size="8.5" font-weight="700" fill="#fff" text-anchor="middle">x</text>
<rect x="466.5" y="880.5" width="14.5" height="18.5" rx="1.5" fill="#8a9bb0"/><rect x="468" y="882" width="11.5" height="3.5" fill="#4fc3f7"/>
<rect x="468.0" y="887.5" width="3" height="2.7" fill="#eef2f6"/>
<rect x="472.0" y="887.5" width="3" height="2.7" fill="#eef2f6"/>
<rect x="476.0" y="887.5" width="3" height="2.7" fill="#eef2f6"/>
<rect x="468.0" y="891.2" width="3" height="2.7" fill="#eef2f6"/>
<rect x="472.0" y="891.2" width="3" height="2.7" fill="#eef2f6"/>
<rect x="476.0" y="891.2" width="3" height="2.7" fill="#eef2f6"/>
<rect x="468.0" y="894.9" width="3" height="2.7" fill="#eef2f6"/>
<rect x="472.0" y="894.9" width="3" height="2.7" fill="#eef2f6"/>
<rect x="476.0" y="894.9" width="3" height="2.7" fill="#eef2f6"/>
<rect x="476" y="891" width="3.5" height="6" fill="#1565c0"/>
<circle cx="514.5" cy="889.7" r="9.8" fill="#1ed760"/><path d="M508.5 886.5Q515 884.5 521 887.5M509.3 889.8Q515 888.3 520 890.8M510 893Q514.5 891.8 518.8 893.8" fill="none" stroke="#191414" stroke-width="1.5" stroke-linecap="round"/>
<rect x="551" y="880.5" width="14.5" height="17.5" rx="1" fill="#2b7cd3"/><rect x="551" y="880.5" width="14.5" height="5" fill="#41a5ee"/><rect x="551" y="892" width="14.5" height="6" fill="#185abd"/><rect x="546.5" y="884" width="10" height="10.5" rx="1" fill="#185abd"/><text x="551.5" y="892.5" font-size="8" font-weight="700" fill="#fff" text-anchor="middle">W</text>
<path d="M588.3 898.5L589.8 893.5A9.3 9.3 0 1 1 593.3 896.9Z" fill="#25d366"/><path d="M592 885.5Q592 893 600.5 895.5L602 893.5L599.7 892L598.5 893Q594.5 891.5 594 887.5L595 886.5L593.8 884Z" fill="#fff"/>
<ellipse cx="637" cy="890.5" rx="10" ry="8" fill="#d5e6f5" transform="rotate(-15 637 890.5)"/><circle cx="632" cy="887.5" r="1.8" fill="#e53935"/><circle cx="636" cy="885" r="1.8" fill="#fdd835"/><circle cx="630.5" cy="892" r="1.8" fill="#1e88e5"/><circle cx="635" cy="895" r="1.8" fill="#43a047"/><path d="M647 880L639 895" stroke="#c98a3b" stroke-width="2.5" stroke-linecap="round"/>
<text x="1572" y="885.5" font-size="10" fill="#f4f4f4" textLength="22" lengthAdjust="spacingAndGlyphs">03:31</text>
<text x="1559" y="901" font-size="10" fill="#f4f4f4" textLength="47" lengthAdjust="spacingAndGlyphs">22/09/2021</text>
</svg>
</body></html>
